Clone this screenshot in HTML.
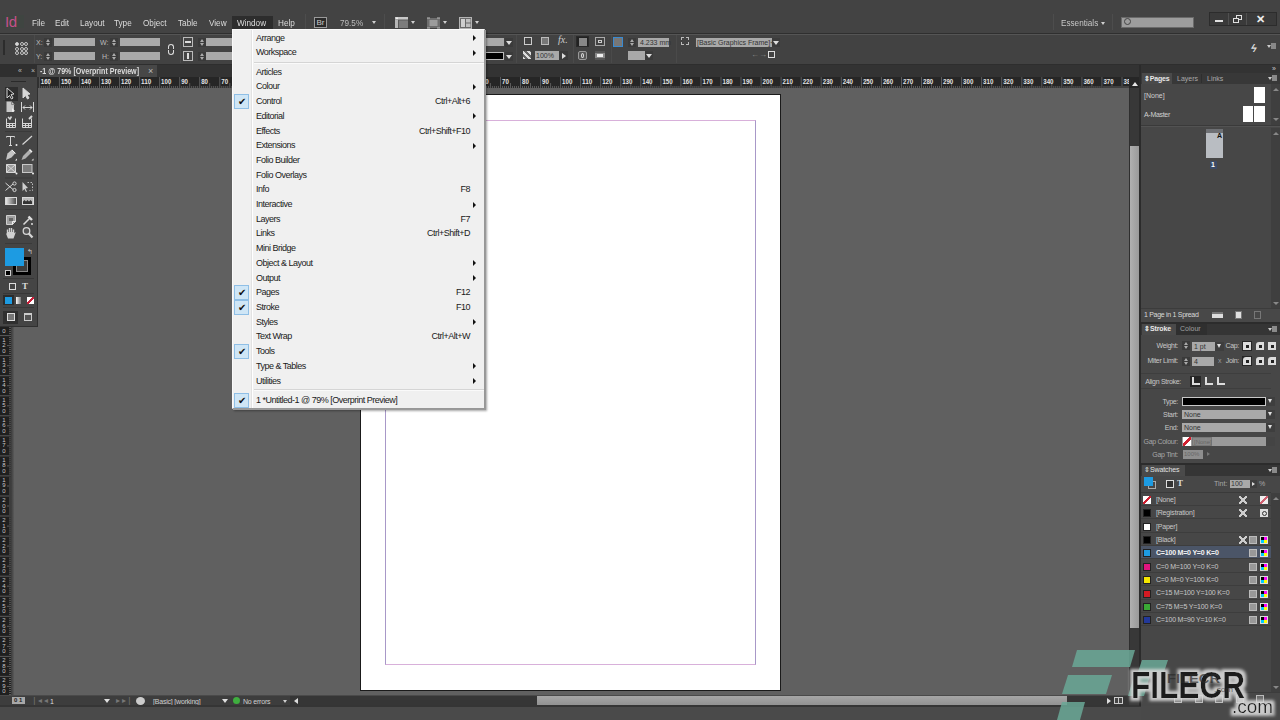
<!DOCTYPE html>
<html><head><meta charset="utf-8">
<style>
*{margin:0;padding:0;box-sizing:border-box}
html,body{width:1280px;height:720px;overflow:hidden;background:#606060;font-family:"Liberation Sans",sans-serif}
.a{position:absolute}
.mt{position:absolute;top:15.7px;font-size:9.5px;line-height:13px;color:#dcdcdc;transform:scaleX(0.86);transform-origin:0 0;white-space:nowrap}
.tri{position:absolute;width:0;height:0;border-style:solid;border-width:4px 3px 0 3px;border-color:#d0d0d0 transparent transparent transparent}
#menubar{left:0;top:0;width:1280px;height:34px;background:#434343;border-bottom:1px solid #2f2f2f}
#ctrl{left:0;top:34px;width:1280px;height:31px;background:#424242;border-top:1px solid #555;border-bottom:1px solid #2e2e2e}
#tabs{left:0;top:65px;width:1141px;height:12px;background:#333}
#hruler{left:37px;top:77px;width:1103px;height:11px;background:#262626;overflow:hidden}
#canvas{left:10px;top:88px;width:1119px;height:608px;background:#606060}
#tools{left:0;top:77px;width:38px;height:250px;background:#454545;border-right:1px solid #303030;border-bottom:1px solid #303030}
#vruler{left:0;top:327px;width:14px;height:369px;background:#1f1f1f}
#vscroll{left:1129px;top:77px;width:12px;height:619px;background:#3a3a3a}
#page{left:360px;top:94px;width:421px;height:597px;background:#fff;border:1px solid #1a1a1a}
#margin{left:385px;top:120px;width:371px;height:545px;border-style:solid;border-width:1px;border-color:#d8b0da #a898c8 #d8b0da #a898c8}
#status{left:0;top:695px;width:1141px;height:11px;background:#3c3c3c}
#bottom{left:0;top:706px;width:1280px;height:14px;background:#4a4a4a}
#hscroll{left:537px;top:696px;width:570px;height:10px;background:#929292}
#rpanel{left:1141px;top:65px;width:139px;height:655px;background:#494949}
#menu{left:232px;top:29px;width:253px;height:380px;background:#f0f0f0;border:1px solid #979797;border-left-color:#fafafa;border-top-color:#fafafa;box-shadow:1px 1px 0 #9a9a9a,2px 2px 2px rgba(0,0,0,.35)}
.mi{position:absolute;left:23px;height:13px;font-size:9px;line-height:13px;color:#1a1a1a;letter-spacing:-0.5px;white-space:nowrap}
.ms{position:absolute;right:14px;height:13px;font-size:9px;line-height:13px;color:#1a1a1a;letter-spacing:-0.5px;white-space:nowrap}
.marr{position:absolute;left:240px;width:0;height:0;border-style:solid;border-width:3px 0 3px 3.5px;border-color:transparent transparent transparent #111}
.chk{position:absolute;left:1px;width:15px;height:15px;background:#cfe6f6;border:1px solid #8fbfe6;text-align:center;font-size:10px;line-height:13px;color:#111}
.lbl{position:absolute;font-size:7px;line-height:9px;color:#bbb}
.spin{position:absolute;width:8px;height:9px;background:#3a3a3a}
.spin:before{content:"";position:absolute;left:2px;top:1px;border-style:solid;border-width:0 2px 3px 2px;border-color:transparent transparent #aaa transparent}
.spin:after{content:"";position:absolute;left:2px;top:5px;border-style:solid;border-width:3px 2px 0 2px;border-color:#aaa transparent transparent transparent}
.fld{position:absolute;height:8px;background:#a9a9a9}
.vsep{position:absolute;top:2px;width:1px;height:28px;background:#363636;border-right:1px solid #4a4a4a}
.ddb{position:absolute;width:8px;height:9px;background:#3b3b3b}
.ddb:after{content:"";position:absolute;left:1px;top:3px;border-style:solid;border-width:4px 3px 0 3px;border-color:#ddd transparent transparent transparent}

</style></head><body>
<div id="menubar" class="a"><div class="a" style="left:2px;top:15px;width:22px;height:13px;background:#3f4541"></div><div class="a" style="left:5px;top:14px;color:#c4508a;font:15px/15px 'Liberation Sans',sans-serif;letter-spacing:-0.3px">Id</div><div class="a" style="left:232px;top:16px;width:41px;height:13px;background:#2d2d2d"></div><span class="mt" style="left:31.6px">File</span><span class="mt" style="left:54.6px">Edit</span><span class="mt" style="left:79.6px">Layout</span><span class="mt" style="left:114.4px">Type</span><span class="mt" style="left:143px">Object</span><span class="mt" style="left:178px">Table</span><span class="mt" style="left:208.7px">View</span><span class="mt" style="left:237px">Window</span><span class="mt" style="left:278px">Help</span><div class="a" style="left:305px;top:14px;width:1px;height:16px;background:#393939;border-right:1px solid #4d4d4d"></div><div class="a" style="left:384px;top:14px;width:1px;height:16px;background:#393939;border-right:1px solid #4d4d4d"></div><div class="a" style="left:1053px;top:14px;width:1px;height:16px;background:#393939;border-right:1px solid #4d4d4d"></div><div class="a" style="left:1112px;top:14px;width:1px;height:16px;background:#393939;border-right:1px solid #4d4d4d"></div><div class="a" style="left:314px;top:17px;width:13px;height:11px;border:1px solid #9a9a9a;background:#2a2a2a;color:#ccc;font:8px/9px 'Liberation Sans',sans-serif;text-align:center">Br</div><span class="mt" style="left:340px;color:#bdbdbd">79.5%</span><div class="tri" style="left:372px;top:21px;border-width:3px 2.5px 0 2.5px"></div><div class="tri" style="left:411px;top:21px;border-width:3px 2.5px 0 2.5px"></div><div class="tri" style="left:443px;top:21px;border-width:3px 2.5px 0 2.5px"></div><div class="tri" style="left:475px;top:21px;border-width:3px 2.5px 0 2.5px"></div><svg class="a" style="left:394px;top:16px" width="80" height="14" viewBox="394 16 80 14"><rect x="395" y="17" width="13" height="11" fill="#5a5a5a"/><rect x="395" y="17" width="13" height="2.5" fill="#c8c8c8"/><rect x="395" y="19.5" width="3" height="8.5" fill="#b8b8b8"/><rect x="399" y="20.5" width="9" height="7.5" fill="#7c7c7c"/><rect x="396" y="17.5" width="2" height="1.5" fill="#eee"/><rect x="427" y="18" width="13" height="10" fill="#6e6e6e"/><rect x="429.5" y="20" width="8" height="6" fill="#9c9c9c"/><path d="M427 18 h3 M437 18 h3 M427 28 h3 M437 28 h3" stroke="#bbb" stroke-width="1"/><rect x="459.5" y="17.5" width="12" height="11" fill="#6a6a6a" stroke="#b5b5b5"/><rect x="461" y="19" width="4" height="8" fill="#d0d0d0"/><rect x="466" y="19" width="4.5" height="3.5" fill="#c0c0c0"/><rect x="466" y="23.5" width="4.5" height="3.5" fill="#c0c0c0"/></svg><span class="mt" style="left:1060.6px;color:#c8c8c8">Essentials</span><div class="tri" style="left:1101px;top:22px;border-width:3px 2px 0 2px"></div><div class="a" style="left:1121px;top:17px;width:73px;height:11px;background:#9d9d9d;border:1px solid #6a6a6a"></div><div class="a" style="left:1124px;top:18px;width:7px;height:7px;border:1px solid #444;border-radius:50%"></div><div class="a" style="left:1209px;top:12px;width:68px;height:14px;background:#3a3a3a;border:1px solid #2c2c2c"></div><div class="a" style="left:1228px;top:13px;width:1px;height:12px;background:#505050"></div><div class="a" style="left:1246px;top:13px;width:1px;height:12px;background:#505050"></div><div class="a" style="left:1215px;top:20px;width:8px;height:2px;background:#e0e0e0"></div><div class="a" style="left:1236px;top:15px;width:6px;height:5px;border:1px solid #e0e0e0"></div><div class="a" style="left:1233px;top:18px;width:6px;height:5px;border:1px solid #e0e0e0;background:#3a3a3a"></div><div class="a" style="left:1256px;top:12px;color:#eee;font:bold 11px/14px 'Liberation Sans',sans-serif">&#x2715;</div></div>
<div id="ctrl" class="a"><div class="a" style="left:0;top:-2px;width:1280px;height:30px"><div class="a" style="left:3px;top:7px;width:2px;height:15px;background:#2c2c2c"></div><div class="a" style="left:15.0px;top:9.0px;width:4px;height:4px;border:1px solid #c8c8c8;border-radius:50%;background:#ddd"></div><div class="a" style="left:19.6px;top:9.0px;width:4px;height:4px;border:1px solid #c8c8c8;border-radius:50%;background:transparent"></div><div class="a" style="left:24.2px;top:9.0px;width:4px;height:4px;border:1px solid #c8c8c8;border-radius:50%;background:transparent"></div><div class="a" style="left:15.0px;top:13.5px;width:4px;height:4px;border:1px solid #c8c8c8;border-radius:50%;background:transparent"></div><div class="a" style="left:19.6px;top:13.5px;width:4px;height:4px;border:1px solid #c8c8c8;border-radius:50%;background:transparent"></div><div class="a" style="left:24.2px;top:13.5px;width:4px;height:4px;border:1px solid #c8c8c8;border-radius:50%;background:transparent"></div><div class="a" style="left:15.0px;top:18.0px;width:4px;height:4px;border:1px solid #c8c8c8;border-radius:50%;background:transparent"></div><div class="a" style="left:19.6px;top:18.0px;width:4px;height:4px;border:1px solid #c8c8c8;border-radius:50%;background:transparent"></div><div class="a" style="left:24.2px;top:18.0px;width:4px;height:4px;border:1px solid #c8c8c8;border-radius:50%;background:transparent"></div><div class="lbl" style="left:36px;top:5px">X:</div><div class="lbl" style="left:36px;top:19px">Y:</div><div class="lbl" style="left:100px;top:5px">W:</div><div class="lbl" style="left:102px;top:19px">H:</div><div class="spin" style="left:44px;top:5px"></div><div class="spin" style="left:44px;top:19px"></div><div class="spin" style="left:110px;top:5px"></div><div class="spin" style="left:110px;top:19px"></div><div class="spin" style="left:198px;top:5px"></div><div class="spin" style="left:198px;top:19px"></div><div class="fld" style="left:54px;top:5px;width:41px"></div><div class="fld" style="left:54px;top:19px;width:41px"></div><div class="fld" style="left:120px;top:5px;width:40px"></div><div class="fld" style="left:120px;top:19px;width:40px"></div><div class="fld" style="left:206px;top:5px;width:30px"></div><div class="fld" style="left:206px;top:19px;width:30px"></div><div class="a" style="left:168px;top:11px;width:6px;height:5px;border:1.5px solid #ddd;border-bottom:none;border-radius:3px 3px 0 0"></div><div class="a" style="left:168px;top:17px;width:6px;height:5px;border:1.5px solid #ddd;border-top:none;border-radius:0 0 3px 3px"></div><div class="vsep" style="left:34px"></div><div class="vsep" style="left:180px"></div><div class="vsep" style="left:516px"></div><div class="vsep" style="left:573px"></div><div class="vsep" style="left:611px"></div><div class="vsep" style="left:676px"></div><div class="a" style="left:183px;top:4px;width:10px;height:10px;border:1px solid #bbb;background:#444"><div class="a" style="left:1px;top:3px;width:6px;height:2px;background:#ddd"></div></div><div class="a" style="left:183px;top:18px;width:10px;height:10px;border:1px solid #bbb;background:#444"><div class="a" style="left:3px;top:1px;width:2px;height:6px;background:#ddd"></div></div><div class="fld" style="left:485px;top:5px;width:19px"></div><div class="ddb" style="left:505px;top:5px"></div><div class="a" style="left:485px;top:19px;width:19px;height:8px;background:#000;border:1px solid #bbb;border-left:none"></div><div class="ddb" style="left:505px;top:19px"></div><div class="a" style="left:524px;top:4px;width:8px;height:8px;border:1px solid #ccc"></div><div class="a" style="left:541px;top:4px;width:8px;height:8px;border:1px solid #bbb;background:#777"></div><div class="a" style="left:558px;top:1px;color:#ccc;font:italic 10px/12px 'Liberation Serif',serif">fx.</div><div class="a" style="left:523px;top:18px;width:8px;height:8px;background:repeating-linear-gradient(45deg,#ddd 0 2px,#666 2px 4px)"></div><div class="a" style="left:535px;top:18px;width:24px;height:9px;background:#a9a9a9;color:#333;font:7px/9px 'Liberation Sans',sans-serif;padding-left:1px">100%</div><div class="a" style="left:559px;top:18px;width:9px;height:9px;background:#3a3a3a"><div class="a" style="left:3px;top:1.5px;width:0;height:0;border-style:solid;border-width:3px 0 3px 4px;border-color:transparent transparent transparent #ddd"></div></div><div class="a" style="left:576px;top:3px;width:13px;height:11px;background:#222;border:1px solid #2a2a2a"><div class="a" style="left:2px;top:1px;width:8px;height:8px;background:#888"></div></div><div class="a" style="left:595px;top:4px;width:10px;height:9px;border:1px solid #aaa"><div class="a" style="left:2px;top:2px;width:4px;height:3px;border:1px solid #ccc"></div></div><div class="a" style="left:578px;top:18px;width:9px;height:9px;border:1px solid #999;background:#555;border-radius:2px"><div class="a" style="left:2px;top:1px;width:3px;height:5px;border:1px solid #ddd;border-radius:50%"></div></div><div class="a" style="left:595px;top:18px;width:10px;height:9px;background:#888;border-top:2px solid #555;border-bottom:2px solid #555"><div class="a" style="left:2px;top:1px;width:6px;height:3px;background:#eee"></div></div><div class="a" style="left:613px;top:4px;width:10px;height:10px;border:1.5px solid #3a8ad0;background:#777"></div><div class="spin" style="left:628px;top:5px"></div><div class="a" style="left:638px;top:5px;width:31px;height:9px;background:#a9a9a9;color:#333;font:7px/9px 'Liberation Sans',sans-serif;padding-left:2px;white-space:nowrap">4.233 mm</div><div class="fld" style="left:628px;top:18px;width:17px;height:9px"></div><div class="ddb" style="left:645px;top:18px"></div><div class="a" style="left:681px;top:4px;width:8px;height:8px;border:1px dashed #bbb"></div><div class="a" style="left:695px;top:5px;width:77px;height:9px;background:#a9a9a9;color:#333;font:7px/9px 'Liberation Sans',sans-serif;padding-left:1px;white-space:nowrap;border-left:1px solid #444">[Basic Graphics Frame]+</div><div class="ddb" style="left:772px;top:5px"></div><div class="a" style="left:751px;top:18px;width:10px;height:8px;color:#888;font:8px/8px 'Liberation Sans',sans-serif">&#x2190;&#x2192;</div><div class="a" style="left:768px;top:18px;width:7px;height:7px;border:1px solid #ddd"></div><div class="a" style="left:1251px;top:8px;color:#ddd;font:bold 11px/14px 'Liberation Sans',sans-serif;transform:skewX(-15deg)">&#x03DF;</div><div class="a" style="left:1267px;top:12px;width:0;height:0;border-style:solid;border-width:3px 2px 0 2px;border-color:#ccc transparent transparent transparent"></div><div class="a" style="left:1271px;top:10px;width:5px;height:6px;background:#888"></div></div></div>
<div id="tabs" class="a"><div class="a" style="left:0;top:0;width:37px;height:12px;background:#2f2f2f"></div><div class="a" style="left:18px;top:1px;color:#bbb;font:7px/10px 'Liberation Sans',sans-serif">&#x00AB;</div><div class="a" style="left:31px;top:1px;color:#bbb;font:7px/10px 'Liberation Sans',sans-serif">&#x00D7;</div><div class="a" style="left:37px;top:0;width:120px;height:12px;background:#474747"></div><div class="a" style="left:40px;top:0px;color:#dcdcdc;font:bold 9px/12px 'Liberation Sans',sans-serif;white-space:nowrap;transform:scaleX(0.79);transform-origin:0 0">-1 @ 79% [Overprint Preview]</div><div class="a" style="left:148px;top:0px;color:#bbb;font:9px/12px 'Liberation Sans',sans-serif">&#x00D7;</div></div>
<div id="canvas" class="a"></div>
<div id="page" class="a"></div>
<div id="margin" class="a"></div>
<div id="hruler" class="a"><svg class="a" style="left:0;top:0" width="1092" height="11"><g stroke="#5a5a5a" stroke-width="1"><line x1="2.3" y1="0" x2="2.3" y2="11"/><line x1="4.3" y1="9" x2="4.3" y2="11"/><line x1="6.3" y1="9" x2="6.3" y2="11"/><line x1="8.3" y1="9" x2="8.3" y2="11"/><line x1="10.3" y1="9" x2="10.3" y2="11"/><line x1="12.3" y1="6" x2="12.3" y2="11"/><line x1="14.3" y1="9" x2="14.3" y2="11"/><line x1="16.3" y1="9" x2="16.3" y2="11"/><line x1="18.3" y1="9" x2="18.3" y2="11"/><line x1="20.3" y1="9" x2="20.3" y2="11"/><line x1="22.4" y1="0" x2="22.4" y2="11"/><line x1="24.4" y1="9" x2="24.4" y2="11"/><line x1="26.4" y1="9" x2="26.4" y2="11"/><line x1="28.4" y1="9" x2="28.4" y2="11"/><line x1="30.4" y1="9" x2="30.4" y2="11"/><line x1="32.4" y1="6" x2="32.4" y2="11"/><line x1="34.4" y1="9" x2="34.4" y2="11"/><line x1="36.4" y1="9" x2="36.4" y2="11"/><line x1="38.4" y1="9" x2="38.4" y2="11"/><line x1="40.4" y1="9" x2="40.4" y2="11"/><line x1="42.4" y1="0" x2="42.4" y2="11"/><line x1="44.4" y1="9" x2="44.4" y2="11"/><line x1="46.4" y1="9" x2="46.4" y2="11"/><line x1="48.4" y1="9" x2="48.4" y2="11"/><line x1="50.4" y1="9" x2="50.4" y2="11"/><line x1="52.4" y1="6" x2="52.4" y2="11"/><line x1="54.4" y1="9" x2="54.4" y2="11"/><line x1="56.4" y1="9" x2="56.4" y2="11"/><line x1="58.4" y1="9" x2="58.4" y2="11"/><line x1="60.4" y1="9" x2="60.4" y2="11"/><line x1="62.5" y1="0" x2="62.5" y2="11"/><line x1="64.5" y1="9" x2="64.5" y2="11"/><line x1="66.5" y1="9" x2="66.5" y2="11"/><line x1="68.5" y1="9" x2="68.5" y2="11"/><line x1="70.5" y1="9" x2="70.5" y2="11"/><line x1="72.5" y1="6" x2="72.5" y2="11"/><line x1="74.5" y1="9" x2="74.5" y2="11"/><line x1="76.5" y1="9" x2="76.5" y2="11"/><line x1="78.5" y1="9" x2="78.5" y2="11"/><line x1="80.5" y1="9" x2="80.5" y2="11"/><line x1="82.5" y1="0" x2="82.5" y2="11"/><line x1="84.5" y1="9" x2="84.5" y2="11"/><line x1="86.5" y1="9" x2="86.5" y2="11"/><line x1="88.5" y1="9" x2="88.5" y2="11"/><line x1="90.5" y1="9" x2="90.5" y2="11"/><line x1="92.5" y1="6" x2="92.5" y2="11"/><line x1="94.5" y1="9" x2="94.5" y2="11"/><line x1="96.5" y1="9" x2="96.5" y2="11"/><line x1="98.5" y1="9" x2="98.5" y2="11"/><line x1="100.5" y1="9" x2="100.5" y2="11"/><line x1="102.6" y1="0" x2="102.6" y2="11"/><line x1="104.6" y1="9" x2="104.6" y2="11"/><line x1="106.6" y1="9" x2="106.6" y2="11"/><line x1="108.6" y1="9" x2="108.6" y2="11"/><line x1="110.6" y1="9" x2="110.6" y2="11"/><line x1="112.6" y1="6" x2="112.6" y2="11"/><line x1="114.6" y1="9" x2="114.6" y2="11"/><line x1="116.6" y1="9" x2="116.6" y2="11"/><line x1="118.6" y1="9" x2="118.6" y2="11"/><line x1="120.6" y1="9" x2="120.6" y2="11"/><line x1="122.6" y1="0" x2="122.6" y2="11"/><line x1="124.6" y1="9" x2="124.6" y2="11"/><line x1="126.6" y1="9" x2="126.6" y2="11"/><line x1="128.6" y1="9" x2="128.6" y2="11"/><line x1="130.6" y1="9" x2="130.6" y2="11"/><line x1="132.6" y1="6" x2="132.6" y2="11"/><line x1="134.6" y1="9" x2="134.6" y2="11"/><line x1="136.6" y1="9" x2="136.6" y2="11"/><line x1="138.6" y1="9" x2="138.6" y2="11"/><line x1="140.6" y1="9" x2="140.6" y2="11"/><line x1="142.7" y1="0" x2="142.7" y2="11"/><line x1="144.7" y1="9" x2="144.7" y2="11"/><line x1="146.7" y1="9" x2="146.7" y2="11"/><line x1="148.7" y1="9" x2="148.7" y2="11"/><line x1="150.7" y1="9" x2="150.7" y2="11"/><line x1="152.7" y1="6" x2="152.7" y2="11"/><line x1="154.7" y1="9" x2="154.7" y2="11"/><line x1="156.7" y1="9" x2="156.7" y2="11"/><line x1="158.7" y1="9" x2="158.7" y2="11"/><line x1="160.7" y1="9" x2="160.7" y2="11"/><line x1="162.7" y1="0" x2="162.7" y2="11"/><line x1="164.7" y1="9" x2="164.7" y2="11"/><line x1="166.7" y1="9" x2="166.7" y2="11"/><line x1="168.7" y1="9" x2="168.7" y2="11"/><line x1="170.7" y1="9" x2="170.7" y2="11"/><line x1="172.7" y1="6" x2="172.7" y2="11"/><line x1="174.7" y1="9" x2="174.7" y2="11"/><line x1="176.7" y1="9" x2="176.7" y2="11"/><line x1="178.7" y1="9" x2="178.7" y2="11"/><line x1="180.7" y1="9" x2="180.7" y2="11"/><line x1="182.8" y1="0" x2="182.8" y2="11"/><line x1="184.8" y1="9" x2="184.8" y2="11"/><line x1="186.8" y1="9" x2="186.8" y2="11"/><line x1="188.8" y1="9" x2="188.8" y2="11"/><line x1="190.8" y1="9" x2="190.8" y2="11"/><line x1="192.8" y1="6" x2="192.8" y2="11"/><line x1="194.8" y1="9" x2="194.8" y2="11"/><line x1="196.8" y1="9" x2="196.8" y2="11"/><line x1="198.8" y1="9" x2="198.8" y2="11"/><line x1="200.8" y1="9" x2="200.8" y2="11"/><line x1="202.8" y1="0" x2="202.8" y2="11"/><line x1="204.8" y1="9" x2="204.8" y2="11"/><line x1="206.8" y1="9" x2="206.8" y2="11"/><line x1="208.8" y1="9" x2="208.8" y2="11"/><line x1="210.8" y1="9" x2="210.8" y2="11"/><line x1="212.8" y1="6" x2="212.8" y2="11"/><line x1="214.8" y1="9" x2="214.8" y2="11"/><line x1="216.8" y1="9" x2="216.8" y2="11"/><line x1="218.8" y1="9" x2="218.8" y2="11"/><line x1="220.8" y1="9" x2="220.8" y2="11"/><line x1="222.9" y1="0" x2="222.9" y2="11"/><line x1="224.9" y1="9" x2="224.9" y2="11"/><line x1="226.9" y1="9" x2="226.9" y2="11"/><line x1="228.9" y1="9" x2="228.9" y2="11"/><line x1="230.9" y1="9" x2="230.9" y2="11"/><line x1="232.9" y1="6" x2="232.9" y2="11"/><line x1="234.9" y1="9" x2="234.9" y2="11"/><line x1="236.9" y1="9" x2="236.9" y2="11"/><line x1="238.9" y1="9" x2="238.9" y2="11"/><line x1="240.9" y1="9" x2="240.9" y2="11"/><line x1="242.9" y1="0" x2="242.9" y2="11"/><line x1="244.9" y1="9" x2="244.9" y2="11"/><line x1="246.9" y1="9" x2="246.9" y2="11"/><line x1="248.9" y1="9" x2="248.9" y2="11"/><line x1="250.9" y1="9" x2="250.9" y2="11"/><line x1="252.9" y1="6" x2="252.9" y2="11"/><line x1="254.9" y1="9" x2="254.9" y2="11"/><line x1="256.9" y1="9" x2="256.9" y2="11"/><line x1="258.9" y1="9" x2="258.9" y2="11"/><line x1="260.9" y1="9" x2="260.9" y2="11"/><line x1="263.0" y1="0" x2="263.0" y2="11"/><line x1="265.0" y1="9" x2="265.0" y2="11"/><line x1="267.0" y1="9" x2="267.0" y2="11"/><line x1="269.0" y1="9" x2="269.0" y2="11"/><line x1="271.0" y1="9" x2="271.0" y2="11"/><line x1="273.0" y1="6" x2="273.0" y2="11"/><line x1="275.0" y1="9" x2="275.0" y2="11"/><line x1="277.0" y1="9" x2="277.0" y2="11"/><line x1="279.0" y1="9" x2="279.0" y2="11"/><line x1="281.0" y1="9" x2="281.0" y2="11"/><line x1="283.0" y1="0" x2="283.0" y2="11"/><line x1="285.0" y1="9" x2="285.0" y2="11"/><line x1="287.0" y1="9" x2="287.0" y2="11"/><line x1="289.0" y1="9" x2="289.0" y2="11"/><line x1="291.0" y1="9" x2="291.0" y2="11"/><line x1="293.0" y1="6" x2="293.0" y2="11"/><line x1="295.0" y1="9" x2="295.0" y2="11"/><line x1="297.0" y1="9" x2="297.0" y2="11"/><line x1="299.0" y1="9" x2="299.0" y2="11"/><line x1="301.0" y1="9" x2="301.0" y2="11"/><line x1="303.1" y1="0" x2="303.1" y2="11"/><line x1="305.1" y1="9" x2="305.1" y2="11"/><line x1="307.1" y1="9" x2="307.1" y2="11"/><line x1="309.1" y1="9" x2="309.1" y2="11"/><line x1="311.1" y1="9" x2="311.1" y2="11"/><line x1="313.1" y1="6" x2="313.1" y2="11"/><line x1="315.1" y1="9" x2="315.1" y2="11"/><line x1="317.1" y1="9" x2="317.1" y2="11"/><line x1="319.1" y1="9" x2="319.1" y2="11"/><line x1="321.1" y1="9" x2="321.1" y2="11"/><line x1="323.1" y1="0" x2="323.1" y2="11"/><line x1="325.1" y1="9" x2="325.1" y2="11"/><line x1="327.1" y1="9" x2="327.1" y2="11"/><line x1="329.1" y1="9" x2="329.1" y2="11"/><line x1="331.1" y1="9" x2="331.1" y2="11"/><line x1="333.1" y1="6" x2="333.1" y2="11"/><line x1="335.1" y1="9" x2="335.1" y2="11"/><line x1="337.1" y1="9" x2="337.1" y2="11"/><line x1="339.1" y1="9" x2="339.1" y2="11"/><line x1="341.1" y1="9" x2="341.1" y2="11"/><line x1="343.2" y1="0" x2="343.2" y2="11"/><line x1="345.2" y1="9" x2="345.2" y2="11"/><line x1="347.2" y1="9" x2="347.2" y2="11"/><line x1="349.2" y1="9" x2="349.2" y2="11"/><line x1="351.2" y1="9" x2="351.2" y2="11"/><line x1="353.2" y1="6" x2="353.2" y2="11"/><line x1="355.2" y1="9" x2="355.2" y2="11"/><line x1="357.2" y1="9" x2="357.2" y2="11"/><line x1="359.2" y1="9" x2="359.2" y2="11"/><line x1="361.2" y1="9" x2="361.2" y2="11"/><line x1="363.2" y1="0" x2="363.2" y2="11"/><line x1="365.2" y1="9" x2="365.2" y2="11"/><line x1="367.2" y1="9" x2="367.2" y2="11"/><line x1="369.2" y1="9" x2="369.2" y2="11"/><line x1="371.2" y1="9" x2="371.2" y2="11"/><line x1="373.2" y1="6" x2="373.2" y2="11"/><line x1="375.2" y1="9" x2="375.2" y2="11"/><line x1="377.2" y1="9" x2="377.2" y2="11"/><line x1="379.2" y1="9" x2="379.2" y2="11"/><line x1="381.2" y1="9" x2="381.2" y2="11"/><line x1="383.2" y1="0" x2="383.2" y2="11"/><line x1="385.3" y1="9" x2="385.3" y2="11"/><line x1="387.3" y1="9" x2="387.3" y2="11"/><line x1="389.3" y1="9" x2="389.3" y2="11"/><line x1="391.3" y1="9" x2="391.3" y2="11"/><line x1="393.3" y1="6" x2="393.3" y2="11"/><line x1="395.3" y1="9" x2="395.3" y2="11"/><line x1="397.3" y1="9" x2="397.3" y2="11"/><line x1="399.3" y1="9" x2="399.3" y2="11"/><line x1="401.3" y1="9" x2="401.3" y2="11"/><line x1="403.3" y1="0" x2="403.3" y2="11"/><line x1="405.3" y1="9" x2="405.3" y2="11"/><line x1="407.3" y1="9" x2="407.3" y2="11"/><line x1="409.3" y1="9" x2="409.3" y2="11"/><line x1="411.3" y1="9" x2="411.3" y2="11"/><line x1="413.3" y1="6" x2="413.3" y2="11"/><line x1="415.3" y1="9" x2="415.3" y2="11"/><line x1="417.3" y1="9" x2="417.3" y2="11"/><line x1="419.3" y1="9" x2="419.3" y2="11"/><line x1="421.3" y1="9" x2="421.3" y2="11"/><line x1="423.4" y1="0" x2="423.4" y2="11"/><line x1="425.4" y1="9" x2="425.4" y2="11"/><line x1="427.4" y1="9" x2="427.4" y2="11"/><line x1="429.4" y1="9" x2="429.4" y2="11"/><line x1="431.4" y1="9" x2="431.4" y2="11"/><line x1="433.4" y1="6" x2="433.4" y2="11"/><line x1="435.4" y1="9" x2="435.4" y2="11"/><line x1="437.4" y1="9" x2="437.4" y2="11"/><line x1="439.4" y1="9" x2="439.4" y2="11"/><line x1="441.4" y1="9" x2="441.4" y2="11"/><line x1="443.4" y1="0" x2="443.4" y2="11"/><line x1="445.4" y1="9" x2="445.4" y2="11"/><line x1="447.4" y1="9" x2="447.4" y2="11"/><line x1="449.4" y1="9" x2="449.4" y2="11"/><line x1="451.4" y1="9" x2="451.4" y2="11"/><line x1="453.4" y1="6" x2="453.4" y2="11"/><line x1="455.4" y1="9" x2="455.4" y2="11"/><line x1="457.4" y1="9" x2="457.4" y2="11"/><line x1="459.4" y1="9" x2="459.4" y2="11"/><line x1="461.4" y1="9" x2="461.4" y2="11"/><line x1="463.5" y1="0" x2="463.5" y2="11"/><line x1="465.5" y1="9" x2="465.5" y2="11"/><line x1="467.5" y1="9" x2="467.5" y2="11"/><line x1="469.5" y1="9" x2="469.5" y2="11"/><line x1="471.5" y1="9" x2="471.5" y2="11"/><line x1="473.5" y1="6" x2="473.5" y2="11"/><line x1="475.5" y1="9" x2="475.5" y2="11"/><line x1="477.5" y1="9" x2="477.5" y2="11"/><line x1="479.5" y1="9" x2="479.5" y2="11"/><line x1="481.5" y1="9" x2="481.5" y2="11"/><line x1="483.5" y1="0" x2="483.5" y2="11"/><line x1="485.5" y1="9" x2="485.5" y2="11"/><line x1="487.5" y1="9" x2="487.5" y2="11"/><line x1="489.5" y1="9" x2="489.5" y2="11"/><line x1="491.5" y1="9" x2="491.5" y2="11"/><line x1="493.5" y1="6" x2="493.5" y2="11"/><line x1="495.5" y1="9" x2="495.5" y2="11"/><line x1="497.5" y1="9" x2="497.5" y2="11"/><line x1="499.5" y1="9" x2="499.5" y2="11"/><line x1="501.5" y1="9" x2="501.5" y2="11"/><line x1="503.6" y1="0" x2="503.6" y2="11"/><line x1="505.6" y1="9" x2="505.6" y2="11"/><line x1="507.6" y1="9" x2="507.6" y2="11"/><line x1="509.6" y1="9" x2="509.6" y2="11"/><line x1="511.6" y1="9" x2="511.6" y2="11"/><line x1="513.6" y1="6" x2="513.6" y2="11"/><line x1="515.6" y1="9" x2="515.6" y2="11"/><line x1="517.6" y1="9" x2="517.6" y2="11"/><line x1="519.6" y1="9" x2="519.6" y2="11"/><line x1="521.6" y1="9" x2="521.6" y2="11"/><line x1="523.6" y1="0" x2="523.6" y2="11"/><line x1="525.6" y1="9" x2="525.6" y2="11"/><line x1="527.6" y1="9" x2="527.6" y2="11"/><line x1="529.6" y1="9" x2="529.6" y2="11"/><line x1="531.6" y1="9" x2="531.6" y2="11"/><line x1="533.6" y1="6" x2="533.6" y2="11"/><line x1="535.6" y1="9" x2="535.6" y2="11"/><line x1="537.6" y1="9" x2="537.6" y2="11"/><line x1="539.6" y1="9" x2="539.6" y2="11"/><line x1="541.6" y1="9" x2="541.6" y2="11"/><line x1="543.6" y1="0" x2="543.6" y2="11"/><line x1="545.7" y1="9" x2="545.7" y2="11"/><line x1="547.7" y1="9" x2="547.7" y2="11"/><line x1="549.7" y1="9" x2="549.7" y2="11"/><line x1="551.7" y1="9" x2="551.7" y2="11"/><line x1="553.7" y1="6" x2="553.7" y2="11"/><line x1="555.7" y1="9" x2="555.7" y2="11"/><line x1="557.7" y1="9" x2="557.7" y2="11"/><line x1="559.7" y1="9" x2="559.7" y2="11"/><line x1="561.7" y1="9" x2="561.7" y2="11"/><line x1="563.7" y1="0" x2="563.7" y2="11"/><line x1="565.7" y1="9" x2="565.7" y2="11"/><line x1="567.7" y1="9" x2="567.7" y2="11"/><line x1="569.7" y1="9" x2="569.7" y2="11"/><line x1="571.7" y1="9" x2="571.7" y2="11"/><line x1="573.7" y1="6" x2="573.7" y2="11"/><line x1="575.7" y1="9" x2="575.7" y2="11"/><line x1="577.7" y1="9" x2="577.7" y2="11"/><line x1="579.7" y1="9" x2="579.7" y2="11"/><line x1="581.7" y1="9" x2="581.7" y2="11"/><line x1="583.8" y1="0" x2="583.8" y2="11"/><line x1="585.8" y1="9" x2="585.8" y2="11"/><line x1="587.8" y1="9" x2="587.8" y2="11"/><line x1="589.8" y1="9" x2="589.8" y2="11"/><line x1="591.8" y1="9" x2="591.8" y2="11"/><line x1="593.8" y1="6" x2="593.8" y2="11"/><line x1="595.8" y1="9" x2="595.8" y2="11"/><line x1="597.8" y1="9" x2="597.8" y2="11"/><line x1="599.8" y1="9" x2="599.8" y2="11"/><line x1="601.8" y1="9" x2="601.8" y2="11"/><line x1="603.8" y1="0" x2="603.8" y2="11"/><line x1="605.8" y1="9" x2="605.8" y2="11"/><line x1="607.8" y1="9" x2="607.8" y2="11"/><line x1="609.8" y1="9" x2="609.8" y2="11"/><line x1="611.8" y1="9" x2="611.8" y2="11"/><line x1="613.8" y1="6" x2="613.8" y2="11"/><line x1="615.8" y1="9" x2="615.8" y2="11"/><line x1="617.8" y1="9" x2="617.8" y2="11"/><line x1="619.8" y1="9" x2="619.8" y2="11"/><line x1="621.8" y1="9" x2="621.8" y2="11"/><line x1="623.9" y1="0" x2="623.9" y2="11"/><line x1="625.9" y1="9" x2="625.9" y2="11"/><line x1="627.9" y1="9" x2="627.9" y2="11"/><line x1="629.9" y1="9" x2="629.9" y2="11"/><line x1="631.9" y1="9" x2="631.9" y2="11"/><line x1="633.9" y1="6" x2="633.9" y2="11"/><line x1="635.9" y1="9" x2="635.9" y2="11"/><line x1="637.9" y1="9" x2="637.9" y2="11"/><line x1="639.9" y1="9" x2="639.9" y2="11"/><line x1="641.9" y1="9" x2="641.9" y2="11"/><line x1="643.9" y1="0" x2="643.9" y2="11"/><line x1="645.9" y1="9" x2="645.9" y2="11"/><line x1="647.9" y1="9" x2="647.9" y2="11"/><line x1="649.9" y1="9" x2="649.9" y2="11"/><line x1="651.9" y1="9" x2="651.9" y2="11"/><line x1="653.9" y1="6" x2="653.9" y2="11"/><line x1="655.9" y1="9" x2="655.9" y2="11"/><line x1="657.9" y1="9" x2="657.9" y2="11"/><line x1="659.9" y1="9" x2="659.9" y2="11"/><line x1="661.9" y1="9" x2="661.9" y2="11"/><line x1="664.0" y1="0" x2="664.0" y2="11"/><line x1="666.0" y1="9" x2="666.0" y2="11"/><line x1="668.0" y1="9" x2="668.0" y2="11"/><line x1="670.0" y1="9" x2="670.0" y2="11"/><line x1="672.0" y1="9" x2="672.0" y2="11"/><line x1="674.0" y1="6" x2="674.0" y2="11"/><line x1="676.0" y1="9" x2="676.0" y2="11"/><line x1="678.0" y1="9" x2="678.0" y2="11"/><line x1="680.0" y1="9" x2="680.0" y2="11"/><line x1="682.0" y1="9" x2="682.0" y2="11"/><line x1="684.0" y1="0" x2="684.0" y2="11"/><line x1="686.0" y1="9" x2="686.0" y2="11"/><line x1="688.0" y1="9" x2="688.0" y2="11"/><line x1="690.0" y1="9" x2="690.0" y2="11"/><line x1="692.0" y1="9" x2="692.0" y2="11"/><line x1="694.0" y1="6" x2="694.0" y2="11"/><line x1="696.0" y1="9" x2="696.0" y2="11"/><line x1="698.0" y1="9" x2="698.0" y2="11"/><line x1="700.0" y1="9" x2="700.0" y2="11"/><line x1="702.0" y1="9" x2="702.0" y2="11"/><line x1="704.0" y1="0" x2="704.0" y2="11"/><line x1="706.1" y1="9" x2="706.1" y2="11"/><line x1="708.1" y1="9" x2="708.1" y2="11"/><line x1="710.1" y1="9" x2="710.1" y2="11"/><line x1="712.1" y1="9" x2="712.1" y2="11"/><line x1="714.1" y1="6" x2="714.1" y2="11"/><line x1="716.1" y1="9" x2="716.1" y2="11"/><line x1="718.1" y1="9" x2="718.1" y2="11"/><line x1="720.1" y1="9" x2="720.1" y2="11"/><line x1="722.1" y1="9" x2="722.1" y2="11"/><line x1="724.1" y1="0" x2="724.1" y2="11"/><line x1="726.1" y1="9" x2="726.1" y2="11"/><line x1="728.1" y1="9" x2="728.1" y2="11"/><line x1="730.1" y1="9" x2="730.1" y2="11"/><line x1="732.1" y1="9" x2="732.1" y2="11"/><line x1="734.1" y1="6" x2="734.1" y2="11"/><line x1="736.1" y1="9" x2="736.1" y2="11"/><line x1="738.1" y1="9" x2="738.1" y2="11"/><line x1="740.1" y1="9" x2="740.1" y2="11"/><line x1="742.1" y1="9" x2="742.1" y2="11"/><line x1="744.1" y1="0" x2="744.1" y2="11"/><line x1="746.2" y1="9" x2="746.2" y2="11"/><line x1="748.2" y1="9" x2="748.2" y2="11"/><line x1="750.2" y1="9" x2="750.2" y2="11"/><line x1="752.2" y1="9" x2="752.2" y2="11"/><line x1="754.2" y1="6" x2="754.2" y2="11"/><line x1="756.2" y1="9" x2="756.2" y2="11"/><line x1="758.2" y1="9" x2="758.2" y2="11"/><line x1="760.2" y1="9" x2="760.2" y2="11"/><line x1="762.2" y1="9" x2="762.2" y2="11"/><line x1="764.2" y1="0" x2="764.2" y2="11"/><line x1="766.2" y1="9" x2="766.2" y2="11"/><line x1="768.2" y1="9" x2="768.2" y2="11"/><line x1="770.2" y1="9" x2="770.2" y2="11"/><line x1="772.2" y1="9" x2="772.2" y2="11"/><line x1="774.2" y1="6" x2="774.2" y2="11"/><line x1="776.2" y1="9" x2="776.2" y2="11"/><line x1="778.2" y1="9" x2="778.2" y2="11"/><line x1="780.2" y1="9" x2="780.2" y2="11"/><line x1="782.2" y1="9" x2="782.2" y2="11"/><line x1="784.2" y1="0" x2="784.2" y2="11"/><line x1="786.3" y1="9" x2="786.3" y2="11"/><line x1="788.3" y1="9" x2="788.3" y2="11"/><line x1="790.3" y1="9" x2="790.3" y2="11"/><line x1="792.3" y1="9" x2="792.3" y2="11"/><line x1="794.3" y1="6" x2="794.3" y2="11"/><line x1="796.3" y1="9" x2="796.3" y2="11"/><line x1="798.3" y1="9" x2="798.3" y2="11"/><line x1="800.3" y1="9" x2="800.3" y2="11"/><line x1="802.3" y1="9" x2="802.3" y2="11"/><line x1="804.3" y1="0" x2="804.3" y2="11"/><line x1="806.3" y1="9" x2="806.3" y2="11"/><line x1="808.3" y1="9" x2="808.3" y2="11"/><line x1="810.3" y1="9" x2="810.3" y2="11"/><line x1="812.3" y1="9" x2="812.3" y2="11"/><line x1="814.3" y1="6" x2="814.3" y2="11"/><line x1="816.3" y1="9" x2="816.3" y2="11"/><line x1="818.3" y1="9" x2="818.3" y2="11"/><line x1="820.3" y1="9" x2="820.3" y2="11"/><line x1="822.3" y1="9" x2="822.3" y2="11"/><line x1="824.4" y1="0" x2="824.4" y2="11"/><line x1="826.4" y1="9" x2="826.4" y2="11"/><line x1="828.4" y1="9" x2="828.4" y2="11"/><line x1="830.4" y1="9" x2="830.4" y2="11"/><line x1="832.4" y1="9" x2="832.4" y2="11"/><line x1="834.4" y1="6" x2="834.4" y2="11"/><line x1="836.4" y1="9" x2="836.4" y2="11"/><line x1="838.4" y1="9" x2="838.4" y2="11"/><line x1="840.4" y1="9" x2="840.4" y2="11"/><line x1="842.4" y1="9" x2="842.4" y2="11"/><line x1="844.4" y1="0" x2="844.4" y2="11"/><line x1="846.4" y1="9" x2="846.4" y2="11"/><line x1="848.4" y1="9" x2="848.4" y2="11"/><line x1="850.4" y1="9" x2="850.4" y2="11"/><line x1="852.4" y1="9" x2="852.4" y2="11"/><line x1="854.4" y1="6" x2="854.4" y2="11"/><line x1="856.4" y1="9" x2="856.4" y2="11"/><line x1="858.4" y1="9" x2="858.4" y2="11"/><line x1="860.4" y1="9" x2="860.4" y2="11"/><line x1="862.4" y1="9" x2="862.4" y2="11"/><line x1="864.5" y1="0" x2="864.5" y2="11"/><line x1="866.5" y1="9" x2="866.5" y2="11"/><line x1="868.5" y1="9" x2="868.5" y2="11"/><line x1="870.5" y1="9" x2="870.5" y2="11"/><line x1="872.5" y1="9" x2="872.5" y2="11"/><line x1="874.5" y1="6" x2="874.5" y2="11"/><line x1="876.5" y1="9" x2="876.5" y2="11"/><line x1="878.5" y1="9" x2="878.5" y2="11"/><line x1="880.5" y1="9" x2="880.5" y2="11"/><line x1="882.5" y1="9" x2="882.5" y2="11"/><line x1="884.5" y1="0" x2="884.5" y2="11"/><line x1="886.5" y1="9" x2="886.5" y2="11"/><line x1="888.5" y1="9" x2="888.5" y2="11"/><line x1="890.5" y1="9" x2="890.5" y2="11"/><line x1="892.5" y1="9" x2="892.5" y2="11"/><line x1="894.5" y1="6" x2="894.5" y2="11"/><line x1="896.5" y1="9" x2="896.5" y2="11"/><line x1="898.5" y1="9" x2="898.5" y2="11"/><line x1="900.5" y1="9" x2="900.5" y2="11"/><line x1="902.5" y1="9" x2="902.5" y2="11"/><line x1="904.5" y1="0" x2="904.5" y2="11"/><line x1="906.6" y1="9" x2="906.6" y2="11"/><line x1="908.6" y1="9" x2="908.6" y2="11"/><line x1="910.6" y1="9" x2="910.6" y2="11"/><line x1="912.6" y1="9" x2="912.6" y2="11"/><line x1="914.6" y1="6" x2="914.6" y2="11"/><line x1="916.6" y1="9" x2="916.6" y2="11"/><line x1="918.6" y1="9" x2="918.6" y2="11"/><line x1="920.6" y1="9" x2="920.6" y2="11"/><line x1="922.6" y1="9" x2="922.6" y2="11"/><line x1="924.6" y1="0" x2="924.6" y2="11"/><line x1="926.6" y1="9" x2="926.6" y2="11"/><line x1="928.6" y1="9" x2="928.6" y2="11"/><line x1="930.6" y1="9" x2="930.6" y2="11"/><line x1="932.6" y1="9" x2="932.6" y2="11"/><line x1="934.6" y1="6" x2="934.6" y2="11"/><line x1="936.6" y1="9" x2="936.6" y2="11"/><line x1="938.6" y1="9" x2="938.6" y2="11"/><line x1="940.6" y1="9" x2="940.6" y2="11"/><line x1="942.6" y1="9" x2="942.6" y2="11"/><line x1="944.6" y1="0" x2="944.6" y2="11"/><line x1="946.7" y1="9" x2="946.7" y2="11"/><line x1="948.7" y1="9" x2="948.7" y2="11"/><line x1="950.7" y1="9" x2="950.7" y2="11"/><line x1="952.7" y1="9" x2="952.7" y2="11"/><line x1="954.7" y1="6" x2="954.7" y2="11"/><line x1="956.7" y1="9" x2="956.7" y2="11"/><line x1="958.7" y1="9" x2="958.7" y2="11"/><line x1="960.7" y1="9" x2="960.7" y2="11"/><line x1="962.7" y1="9" x2="962.7" y2="11"/><line x1="964.7" y1="0" x2="964.7" y2="11"/><line x1="966.7" y1="9" x2="966.7" y2="11"/><line x1="968.7" y1="9" x2="968.7" y2="11"/><line x1="970.7" y1="9" x2="970.7" y2="11"/><line x1="972.7" y1="9" x2="972.7" y2="11"/><line x1="974.7" y1="6" x2="974.7" y2="11"/><line x1="976.7" y1="9" x2="976.7" y2="11"/><line x1="978.7" y1="9" x2="978.7" y2="11"/><line x1="980.7" y1="9" x2="980.7" y2="11"/><line x1="982.7" y1="9" x2="982.7" y2="11"/><line x1="984.8" y1="0" x2="984.8" y2="11"/><line x1="986.8" y1="9" x2="986.8" y2="11"/><line x1="988.8" y1="9" x2="988.8" y2="11"/><line x1="990.8" y1="9" x2="990.8" y2="11"/><line x1="992.8" y1="9" x2="992.8" y2="11"/><line x1="994.8" y1="6" x2="994.8" y2="11"/><line x1="996.8" y1="9" x2="996.8" y2="11"/><line x1="998.8" y1="9" x2="998.8" y2="11"/><line x1="1000.8" y1="9" x2="1000.8" y2="11"/><line x1="1002.8" y1="9" x2="1002.8" y2="11"/><line x1="1004.8" y1="0" x2="1004.8" y2="11"/><line x1="1006.8" y1="9" x2="1006.8" y2="11"/><line x1="1008.8" y1="9" x2="1008.8" y2="11"/><line x1="1010.8" y1="9" x2="1010.8" y2="11"/><line x1="1012.8" y1="9" x2="1012.8" y2="11"/><line x1="1014.8" y1="6" x2="1014.8" y2="11"/><line x1="1016.8" y1="9" x2="1016.8" y2="11"/><line x1="1018.8" y1="9" x2="1018.8" y2="11"/><line x1="1020.8" y1="9" x2="1020.8" y2="11"/><line x1="1022.8" y1="9" x2="1022.8" y2="11"/><line x1="1024.8" y1="0" x2="1024.8" y2="11"/><line x1="1026.9" y1="9" x2="1026.9" y2="11"/><line x1="1028.9" y1="9" x2="1028.9" y2="11"/><line x1="1030.9" y1="9" x2="1030.9" y2="11"/><line x1="1032.9" y1="9" x2="1032.9" y2="11"/><line x1="1034.9" y1="6" x2="1034.9" y2="11"/><line x1="1036.9" y1="9" x2="1036.9" y2="11"/><line x1="1038.9" y1="9" x2="1038.9" y2="11"/><line x1="1040.9" y1="9" x2="1040.9" y2="11"/><line x1="1042.9" y1="9" x2="1042.9" y2="11"/><line x1="1044.9" y1="0" x2="1044.9" y2="11"/><line x1="1046.9" y1="9" x2="1046.9" y2="11"/><line x1="1048.9" y1="9" x2="1048.9" y2="11"/><line x1="1050.9" y1="9" x2="1050.9" y2="11"/><line x1="1052.9" y1="9" x2="1052.9" y2="11"/><line x1="1054.9" y1="6" x2="1054.9" y2="11"/><line x1="1056.9" y1="9" x2="1056.9" y2="11"/><line x1="1058.9" y1="9" x2="1058.9" y2="11"/><line x1="1060.9" y1="9" x2="1060.9" y2="11"/><line x1="1062.9" y1="9" x2="1062.9" y2="11"/><line x1="1064.9" y1="0" x2="1064.9" y2="11"/><line x1="1067.0" y1="9" x2="1067.0" y2="11"/><line x1="1069.0" y1="9" x2="1069.0" y2="11"/><line x1="1071.0" y1="9" x2="1071.0" y2="11"/><line x1="1073.0" y1="9" x2="1073.0" y2="11"/><line x1="1075.0" y1="6" x2="1075.0" y2="11"/><line x1="1077.0" y1="9" x2="1077.0" y2="11"/><line x1="1079.0" y1="9" x2="1079.0" y2="11"/><line x1="1081.0" y1="9" x2="1081.0" y2="11"/><line x1="1083.0" y1="9" x2="1083.0" y2="11"/><line x1="1085.0" y1="0" x2="1085.0" y2="11"/><line x1="1087.0" y1="9" x2="1087.0" y2="11"/><line x1="1089.0" y1="9" x2="1089.0" y2="11"/><line x1="1091.0" y1="9" x2="1091.0" y2="11"/></g><g fill="#e4e4e4" font-family="Liberation Sans" font-size="7" font-weight="bold"><text x="3.8" y="7" textLength="10.2" lengthAdjust="spacingAndGlyphs">160</text><text x="23.9" y="7" textLength="10.2" lengthAdjust="spacingAndGlyphs">150</text><text x="43.9" y="7" textLength="10.2" lengthAdjust="spacingAndGlyphs">140</text><text x="64.0" y="7" textLength="10.2" lengthAdjust="spacingAndGlyphs">130</text><text x="84.0" y="7" textLength="10.2" lengthAdjust="spacingAndGlyphs">120</text><text x="104.1" y="7" textLength="10.2" lengthAdjust="spacingAndGlyphs">110</text><text x="124.1" y="7" textLength="10.2" lengthAdjust="spacingAndGlyphs">100</text><text x="144.2" y="7" textLength="6.8" lengthAdjust="spacingAndGlyphs">90</text><text x="164.2" y="7" textLength="6.8" lengthAdjust="spacingAndGlyphs">80</text><text x="184.3" y="7" textLength="6.8" lengthAdjust="spacingAndGlyphs">70</text><text x="204.3" y="7" textLength="6.8" lengthAdjust="spacingAndGlyphs">60</text><text x="224.4" y="7" textLength="6.8" lengthAdjust="spacingAndGlyphs">50</text><text x="244.4" y="7" textLength="6.8" lengthAdjust="spacingAndGlyphs">40</text><text x="264.5" y="7" textLength="6.8" lengthAdjust="spacingAndGlyphs">30</text><text x="284.5" y="7" textLength="6.8" lengthAdjust="spacingAndGlyphs">20</text><text x="304.6" y="7" textLength="6.8" lengthAdjust="spacingAndGlyphs">10</text><text x="324.6" y="7" textLength="3.4" lengthAdjust="spacingAndGlyphs">0</text><text x="344.7" y="7" textLength="6.8" lengthAdjust="spacingAndGlyphs">10</text><text x="364.7" y="7" textLength="6.8" lengthAdjust="spacingAndGlyphs">20</text><text x="384.8" y="7" textLength="6.8" lengthAdjust="spacingAndGlyphs">30</text><text x="404.8" y="7" textLength="6.8" lengthAdjust="spacingAndGlyphs">40</text><text x="424.9" y="7" textLength="6.8" lengthAdjust="spacingAndGlyphs">50</text><text x="444.9" y="7" textLength="6.8" lengthAdjust="spacingAndGlyphs">60</text><text x="465.0" y="7" textLength="6.8" lengthAdjust="spacingAndGlyphs">70</text><text x="485.0" y="7" textLength="6.8" lengthAdjust="spacingAndGlyphs">80</text><text x="505.1" y="7" textLength="6.8" lengthAdjust="spacingAndGlyphs">90</text><text x="525.1" y="7" textLength="10.2" lengthAdjust="spacingAndGlyphs">100</text><text x="545.1" y="7" textLength="10.2" lengthAdjust="spacingAndGlyphs">110</text><text x="565.2" y="7" textLength="10.2" lengthAdjust="spacingAndGlyphs">120</text><text x="585.2" y="7" textLength="10.2" lengthAdjust="spacingAndGlyphs">130</text><text x="605.3" y="7" textLength="10.2" lengthAdjust="spacingAndGlyphs">140</text><text x="625.4" y="7" textLength="10.2" lengthAdjust="spacingAndGlyphs">150</text><text x="645.4" y="7" textLength="10.2" lengthAdjust="spacingAndGlyphs">160</text><text x="665.5" y="7" textLength="10.2" lengthAdjust="spacingAndGlyphs">170</text><text x="685.5" y="7" textLength="10.2" lengthAdjust="spacingAndGlyphs">180</text><text x="705.5" y="7" textLength="10.2" lengthAdjust="spacingAndGlyphs">190</text><text x="725.6" y="7" textLength="10.2" lengthAdjust="spacingAndGlyphs">200</text><text x="745.6" y="7" textLength="10.2" lengthAdjust="spacingAndGlyphs">210</text><text x="765.7" y="7" textLength="10.2" lengthAdjust="spacingAndGlyphs">220</text><text x="785.8" y="7" textLength="10.2" lengthAdjust="spacingAndGlyphs">230</text><text x="805.8" y="7" textLength="10.2" lengthAdjust="spacingAndGlyphs">240</text><text x="825.9" y="7" textLength="10.2" lengthAdjust="spacingAndGlyphs">250</text><text x="845.9" y="7" textLength="10.2" lengthAdjust="spacingAndGlyphs">260</text><text x="866.0" y="7" textLength="10.2" lengthAdjust="spacingAndGlyphs">270</text><text x="886.0" y="7" textLength="10.2" lengthAdjust="spacingAndGlyphs">280</text><text x="906.0" y="7" textLength="10.2" lengthAdjust="spacingAndGlyphs">290</text><text x="926.1" y="7" textLength="10.2" lengthAdjust="spacingAndGlyphs">300</text><text x="946.1" y="7" textLength="10.2" lengthAdjust="spacingAndGlyphs">310</text><text x="966.2" y="7" textLength="10.2" lengthAdjust="spacingAndGlyphs">320</text><text x="986.2" y="7" textLength="10.2" lengthAdjust="spacingAndGlyphs">330</text><text x="1006.3" y="7" textLength="10.2" lengthAdjust="spacingAndGlyphs">340</text><text x="1026.3" y="7" textLength="10.2" lengthAdjust="spacingAndGlyphs">350</text><text x="1046.4" y="7" textLength="10.2" lengthAdjust="spacingAndGlyphs">360</text><text x="1066.4" y="7" textLength="10.2" lengthAdjust="spacingAndGlyphs">370</text><text x="1086.5" y="7" textLength="10.2" lengthAdjust="spacingAndGlyphs">380</text></g></svg></div>
<div id="vruler" class="a" style="overflow:hidden"><svg class="a" style="left:0;top:0" width="14" height="369"><g stroke="#5a5a5a" stroke-width="1"><line x1="9" y1="-19.5" x2="11" y2="-19.5"/><line x1="9" y1="-17.5" x2="11" y2="-17.5"/><line x1="9" y1="-15.5" x2="11" y2="-15.5"/><line x1="9" y1="-13.5" x2="11" y2="-13.5"/><line x1="0" y1="-11.5" x2="11" y2="-11.5"/><line x1="9" y1="-9.4" x2="11" y2="-9.4"/><line x1="9" y1="-7.4" x2="11" y2="-7.4"/><line x1="9" y1="-5.4" x2="11" y2="-5.4"/><line x1="9" y1="-3.4" x2="11" y2="-3.4"/><line x1="7" y1="-1.4" x2="11" y2="-1.4"/><line x1="9" y1="0.6" x2="11" y2="0.6"/><line x1="9" y1="2.6" x2="11" y2="2.6"/><line x1="9" y1="4.6" x2="11" y2="4.6"/><line x1="9" y1="6.6" x2="11" y2="6.6"/><line x1="0" y1="8.6" x2="11" y2="8.6"/><line x1="9" y1="10.6" x2="11" y2="10.6"/><line x1="9" y1="12.6" x2="11" y2="12.6"/><line x1="9" y1="14.6" x2="11" y2="14.6"/><line x1="9" y1="16.6" x2="11" y2="16.6"/><line x1="7" y1="18.6" x2="11" y2="18.6"/><line x1="9" y1="20.6" x2="11" y2="20.6"/><line x1="9" y1="22.6" x2="11" y2="22.6"/><line x1="9" y1="24.6" x2="11" y2="24.6"/><line x1="9" y1="26.6" x2="11" y2="26.6"/><line x1="0" y1="28.6" x2="11" y2="28.6"/><line x1="9" y1="30.7" x2="11" y2="30.7"/><line x1="9" y1="32.7" x2="11" y2="32.7"/><line x1="9" y1="34.7" x2="11" y2="34.7"/><line x1="9" y1="36.7" x2="11" y2="36.7"/><line x1="7" y1="38.7" x2="11" y2="38.7"/><line x1="9" y1="40.7" x2="11" y2="40.7"/><line x1="9" y1="42.7" x2="11" y2="42.7"/><line x1="9" y1="44.7" x2="11" y2="44.7"/><line x1="9" y1="46.7" x2="11" y2="46.7"/><line x1="0" y1="48.7" x2="11" y2="48.7"/><line x1="9" y1="50.7" x2="11" y2="50.7"/><line x1="9" y1="52.7" x2="11" y2="52.7"/><line x1="9" y1="54.7" x2="11" y2="54.7"/><line x1="9" y1="56.7" x2="11" y2="56.7"/><line x1="7" y1="58.7" x2="11" y2="58.7"/><line x1="9" y1="60.7" x2="11" y2="60.7"/><line x1="9" y1="62.7" x2="11" y2="62.7"/><line x1="9" y1="64.7" x2="11" y2="64.7"/><line x1="9" y1="66.7" x2="11" y2="66.7"/><line x1="0" y1="68.8" x2="11" y2="68.8"/><line x1="9" y1="70.8" x2="11" y2="70.8"/><line x1="9" y1="72.8" x2="11" y2="72.8"/><line x1="9" y1="74.8" x2="11" y2="74.8"/><line x1="9" y1="76.8" x2="11" y2="76.8"/><line x1="7" y1="78.8" x2="11" y2="78.8"/><line x1="9" y1="80.8" x2="11" y2="80.8"/><line x1="9" y1="82.8" x2="11" y2="82.8"/><line x1="9" y1="84.8" x2="11" y2="84.8"/><line x1="9" y1="86.8" x2="11" y2="86.8"/><line x1="0" y1="88.8" x2="11" y2="88.8"/><line x1="9" y1="90.8" x2="11" y2="90.8"/><line x1="9" y1="92.8" x2="11" y2="92.8"/><line x1="9" y1="94.8" x2="11" y2="94.8"/><line x1="9" y1="96.8" x2="11" y2="96.8"/><line x1="7" y1="98.8" x2="11" y2="98.8"/><line x1="9" y1="100.8" x2="11" y2="100.8"/><line x1="9" y1="102.8" x2="11" y2="102.8"/><line x1="9" y1="104.8" x2="11" y2="104.8"/><line x1="9" y1="106.8" x2="11" y2="106.8"/><line x1="0" y1="108.8" x2="11" y2="108.8"/><line x1="9" y1="110.9" x2="11" y2="110.9"/><line x1="9" y1="112.9" x2="11" y2="112.9"/><line x1="9" y1="114.9" x2="11" y2="114.9"/><line x1="9" y1="116.9" x2="11" y2="116.9"/><line x1="7" y1="118.9" x2="11" y2="118.9"/><line x1="9" y1="120.9" x2="11" y2="120.9"/><line x1="9" y1="122.9" x2="11" y2="122.9"/><line x1="9" y1="124.9" x2="11" y2="124.9"/><line x1="9" y1="126.9" x2="11" y2="126.9"/><line x1="0" y1="128.9" x2="11" y2="128.9"/><line x1="9" y1="130.9" x2="11" y2="130.9"/><line x1="9" y1="132.9" x2="11" y2="132.9"/><line x1="9" y1="134.9" x2="11" y2="134.9"/><line x1="9" y1="136.9" x2="11" y2="136.9"/><line x1="7" y1="138.9" x2="11" y2="138.9"/><line x1="9" y1="140.9" x2="11" y2="140.9"/><line x1="9" y1="142.9" x2="11" y2="142.9"/><line x1="9" y1="144.9" x2="11" y2="144.9"/><line x1="9" y1="146.9" x2="11" y2="146.9"/><line x1="0" y1="148.9" x2="11" y2="148.9"/><line x1="9" y1="151.0" x2="11" y2="151.0"/><line x1="9" y1="153.0" x2="11" y2="153.0"/><line x1="9" y1="155.0" x2="11" y2="155.0"/><line x1="9" y1="157.0" x2="11" y2="157.0"/><line x1="7" y1="159.0" x2="11" y2="159.0"/><line x1="9" y1="161.0" x2="11" y2="161.0"/><line x1="9" y1="163.0" x2="11" y2="163.0"/><line x1="9" y1="165.0" x2="11" y2="165.0"/><line x1="9" y1="167.0" x2="11" y2="167.0"/><line x1="0" y1="169.0" x2="11" y2="169.0"/><line x1="9" y1="171.0" x2="11" y2="171.0"/><line x1="9" y1="173.0" x2="11" y2="173.0"/><line x1="9" y1="175.0" x2="11" y2="175.0"/><line x1="9" y1="177.0" x2="11" y2="177.0"/><line x1="7" y1="179.0" x2="11" y2="179.0"/><line x1="9" y1="181.0" x2="11" y2="181.0"/><line x1="9" y1="183.0" x2="11" y2="183.0"/><line x1="9" y1="185.0" x2="11" y2="185.0"/><line x1="9" y1="187.0" x2="11" y2="187.0"/><line x1="0" y1="189.0" x2="11" y2="189.0"/><line x1="9" y1="191.1" x2="11" y2="191.1"/><line x1="9" y1="193.1" x2="11" y2="193.1"/><line x1="9" y1="195.1" x2="11" y2="195.1"/><line x1="9" y1="197.1" x2="11" y2="197.1"/><line x1="7" y1="199.1" x2="11" y2="199.1"/><line x1="9" y1="201.1" x2="11" y2="201.1"/><line x1="9" y1="203.1" x2="11" y2="203.1"/><line x1="9" y1="205.1" x2="11" y2="205.1"/><line x1="9" y1="207.1" x2="11" y2="207.1"/><line x1="0" y1="209.1" x2="11" y2="209.1"/><line x1="9" y1="211.1" x2="11" y2="211.1"/><line x1="9" y1="213.1" x2="11" y2="213.1"/><line x1="9" y1="215.1" x2="11" y2="215.1"/><line x1="9" y1="217.1" x2="11" y2="217.1"/><line x1="7" y1="219.1" x2="11" y2="219.1"/><line x1="9" y1="221.1" x2="11" y2="221.1"/><line x1="9" y1="223.1" x2="11" y2="223.1"/><line x1="9" y1="225.1" x2="11" y2="225.1"/><line x1="9" y1="227.1" x2="11" y2="227.1"/><line x1="0" y1="229.1" x2="11" y2="229.1"/><line x1="9" y1="231.2" x2="11" y2="231.2"/><line x1="9" y1="233.2" x2="11" y2="233.2"/><line x1="9" y1="235.2" x2="11" y2="235.2"/><line x1="9" y1="237.2" x2="11" y2="237.2"/><line x1="7" y1="239.2" x2="11" y2="239.2"/><line x1="9" y1="241.2" x2="11" y2="241.2"/><line x1="9" y1="243.2" x2="11" y2="243.2"/><line x1="9" y1="245.2" x2="11" y2="245.2"/><line x1="9" y1="247.2" x2="11" y2="247.2"/><line x1="0" y1="249.2" x2="11" y2="249.2"/><line x1="9" y1="251.2" x2="11" y2="251.2"/><line x1="9" y1="253.2" x2="11" y2="253.2"/><line x1="9" y1="255.2" x2="11" y2="255.2"/><line x1="9" y1="257.2" x2="11" y2="257.2"/><line x1="7" y1="259.2" x2="11" y2="259.2"/><line x1="9" y1="261.2" x2="11" y2="261.2"/><line x1="9" y1="263.2" x2="11" y2="263.2"/><line x1="9" y1="265.2" x2="11" y2="265.2"/><line x1="9" y1="267.2" x2="11" y2="267.2"/><line x1="0" y1="269.2" x2="11" y2="269.2"/><line x1="9" y1="271.3" x2="11" y2="271.3"/><line x1="9" y1="273.3" x2="11" y2="273.3"/><line x1="9" y1="275.3" x2="11" y2="275.3"/><line x1="9" y1="277.3" x2="11" y2="277.3"/><line x1="7" y1="279.3" x2="11" y2="279.3"/><line x1="9" y1="281.3" x2="11" y2="281.3"/><line x1="9" y1="283.3" x2="11" y2="283.3"/><line x1="9" y1="285.3" x2="11" y2="285.3"/><line x1="9" y1="287.3" x2="11" y2="287.3"/><line x1="0" y1="289.3" x2="11" y2="289.3"/><line x1="9" y1="291.3" x2="11" y2="291.3"/><line x1="9" y1="293.3" x2="11" y2="293.3"/><line x1="9" y1="295.3" x2="11" y2="295.3"/><line x1="9" y1="297.3" x2="11" y2="297.3"/><line x1="7" y1="299.3" x2="11" y2="299.3"/><line x1="9" y1="301.3" x2="11" y2="301.3"/><line x1="9" y1="303.3" x2="11" y2="303.3"/><line x1="9" y1="305.3" x2="11" y2="305.3"/><line x1="9" y1="307.3" x2="11" y2="307.3"/><line x1="0" y1="309.4" x2="11" y2="309.4"/><line x1="9" y1="311.4" x2="11" y2="311.4"/><line x1="9" y1="313.4" x2="11" y2="313.4"/><line x1="9" y1="315.4" x2="11" y2="315.4"/><line x1="9" y1="317.4" x2="11" y2="317.4"/><line x1="7" y1="319.4" x2="11" y2="319.4"/><line x1="9" y1="321.4" x2="11" y2="321.4"/><line x1="9" y1="323.4" x2="11" y2="323.4"/><line x1="9" y1="325.4" x2="11" y2="325.4"/><line x1="9" y1="327.4" x2="11" y2="327.4"/><line x1="0" y1="329.4" x2="11" y2="329.4"/><line x1="9" y1="331.4" x2="11" y2="331.4"/><line x1="9" y1="333.4" x2="11" y2="333.4"/><line x1="9" y1="335.4" x2="11" y2="335.4"/><line x1="9" y1="337.4" x2="11" y2="337.4"/><line x1="7" y1="339.4" x2="11" y2="339.4"/><line x1="9" y1="341.4" x2="11" y2="341.4"/><line x1="9" y1="343.4" x2="11" y2="343.4"/><line x1="9" y1="345.4" x2="11" y2="345.4"/><line x1="9" y1="347.4" x2="11" y2="347.4"/><line x1="0" y1="349.4" x2="11" y2="349.4"/><line x1="9" y1="351.5" x2="11" y2="351.5"/><line x1="9" y1="353.5" x2="11" y2="353.5"/><line x1="9" y1="355.5" x2="11" y2="355.5"/><line x1="9" y1="357.5" x2="11" y2="357.5"/><line x1="7" y1="359.5" x2="11" y2="359.5"/><line x1="9" y1="361.5" x2="11" y2="361.5"/><line x1="9" y1="363.5" x2="11" y2="363.5"/><line x1="9" y1="365.5" x2="11" y2="365.5"/><line x1="9" y1="367.5" x2="11" y2="367.5"/><line x1="0" y1="369.5" x2="11" y2="369.5"/></g><g fill="#c8c8c8" font-family="Liberation Sans" font-size="6"><text x="4" y="-5.5" text-anchor="middle">1</text><text x="4" y="0.0" text-anchor="middle">1</text><text x="4" y="5.5" text-anchor="middle">0</text><text x="4" y="14.6" text-anchor="middle">1</text><text x="4" y="20.1" text-anchor="middle">2</text><text x="4" y="25.6" text-anchor="middle">0</text><text x="4" y="34.6" text-anchor="middle">1</text><text x="4" y="40.1" text-anchor="middle">3</text><text x="4" y="45.6" text-anchor="middle">0</text><text x="4" y="54.7" text-anchor="middle">1</text><text x="4" y="60.2" text-anchor="middle">4</text><text x="4" y="65.7" text-anchor="middle">0</text><text x="4" y="74.8" text-anchor="middle">1</text><text x="4" y="80.2" text-anchor="middle">5</text><text x="4" y="85.8" text-anchor="middle">0</text><text x="4" y="94.8" text-anchor="middle">1</text><text x="4" y="100.3" text-anchor="middle">6</text><text x="4" y="105.8" text-anchor="middle">0</text><text x="4" y="114.8" text-anchor="middle">1</text><text x="4" y="120.3" text-anchor="middle">7</text><text x="4" y="125.8" text-anchor="middle">0</text><text x="4" y="134.9" text-anchor="middle">1</text><text x="4" y="140.4" text-anchor="middle">8</text><text x="4" y="145.9" text-anchor="middle">0</text><text x="4" y="154.9" text-anchor="middle">1</text><text x="4" y="160.4" text-anchor="middle">9</text><text x="4" y="165.9" text-anchor="middle">0</text><text x="4" y="175.0" text-anchor="middle">2</text><text x="4" y="180.5" text-anchor="middle">0</text><text x="4" y="186.0" text-anchor="middle">0</text><text x="4" y="195.0" text-anchor="middle">2</text><text x="4" y="200.5" text-anchor="middle">1</text><text x="4" y="206.0" text-anchor="middle">0</text><text x="4" y="215.1" text-anchor="middle">2</text><text x="4" y="220.6" text-anchor="middle">2</text><text x="4" y="226.1" text-anchor="middle">0</text><text x="4" y="235.1" text-anchor="middle">2</text><text x="4" y="240.6" text-anchor="middle">3</text><text x="4" y="246.1" text-anchor="middle">0</text><text x="4" y="255.2" text-anchor="middle">2</text><text x="4" y="260.7" text-anchor="middle">4</text><text x="4" y="266.2" text-anchor="middle">0</text><text x="4" y="275.2" text-anchor="middle">2</text><text x="4" y="280.8" text-anchor="middle">5</text><text x="4" y="286.2" text-anchor="middle">0</text><text x="4" y="295.3" text-anchor="middle">2</text><text x="4" y="300.8" text-anchor="middle">6</text><text x="4" y="306.3" text-anchor="middle">0</text><text x="4" y="315.4" text-anchor="middle">2</text><text x="4" y="320.9" text-anchor="middle">7</text><text x="4" y="326.4" text-anchor="middle">0</text><text x="4" y="335.4" text-anchor="middle">2</text><text x="4" y="340.9" text-anchor="middle">8</text><text x="4" y="346.4" text-anchor="middle">0</text><text x="4" y="355.4" text-anchor="middle">2</text><text x="4" y="360.9" text-anchor="middle">9</text><text x="4" y="366.4" text-anchor="middle">0</text><text x="4" y="375.5" text-anchor="middle">3</text><text x="4" y="381.0" text-anchor="middle">0</text><text x="4" y="386.5" text-anchor="middle">0</text></g></svg><div class="a" style="left:11px;top:0;width:3px;height:369px;background:linear-gradient(90deg,#3a3a3a,#5a5a5a)"></div></div>
<div id="tools" class="a"><div class="a" style="left:11px;top:4px;width:15px;height:1px;background:#2a2a2a"></div><div class="a" style="left:5px;top:10px;width:13px;height:14px;background:#2e2e2e"></div><svg class="a" style="left:0;top:0" width="37" height="250" viewBox="0 77 37 250"><defs><linearGradient id="tg1"><stop offset="0" stop-color="#eee"/><stop offset="1" stop-color="#444"/></linearGradient></defs><g fill="none" stroke="#d6d6d6" stroke-width="1"><path d="M7 88 L7 98 L9.5 95.5 L11.5 99 L13 98 L11 94.5 L14 94 Z" fill="#222"/><path d="M23 88 L23 98 L25.5 95.5 L27.5 99 L29 98 L27 94.5 L30 94 Z" fill="#d6d6d6"/><path d="M6.5 101.5 h5 l2.5 2.5 v8 h-7.5 z" fill="#c8c8c8" stroke="none"/><path d="M11.5 101.5 v3 h3" stroke="#888"/><path d="M12 108 l3 3 l-3 1 z" fill="#eee" stroke="none"/><path d="M21.5 102 v10 M33.5 102 v10 M23 107.5 h9" /><path d="M25 105.5 l-2 2 l2 2 M30 105.5 l2 2 l-2 2" /><path d="M6.5 118.5 v9 h9 v-9 M6.5 123.5 h9 M6.5 125.5 h9 M9.5 123.5 v4 M12.5 123.5 v4" /><path d="M8 117 l2 2 l1.5 -2.5" stroke-width="1.5"/><path d="M22.5 118.5 v9 h9 v-9 M22.5 123.5 h9 M22.5 125.5 h9 M25.5 123.5 v4 M28.5 123.5 v4" /><path d="M29 119 l3 -3" stroke-width="2"/><path d="M5 131.5 h27" stroke="#3a3a3a"/><path d="M6.5 137.5 v-1 h8 v1 M10.5 136.5 v8.5 M9 145.5 h3" stroke-width="1"/><path d="M22.5 144.5 L32 136" stroke-width="1.2"/><circle cx="16.5" cy="145" r="1" fill="#eee" stroke="none"/><path d="M6 160 L7.5 153.5 L12 149.5 L15.5 153 L11.5 157.5 Z" fill="#c4c4c4" stroke="none"/><path d="M12 150 l3.5 3.5" stroke="#eee"/><path d="M21.5 160 L23 156 L29.5 149.5 L32 152 L25.5 158.5 Z" fill="#b0b0b0" stroke="none"/><path d="M29.5 149.5 L32 152" stroke="#eee" stroke-width="1.5"/><path d="M15 160.5 l2 -2 v2 z M31.5 160.5 l2 -2 v2 z" fill="#eee" stroke="none"/><rect x="6" y="164" width="10" height="9" fill="#9a9a9a" stroke="none"/><path d="M6.5 164.5 h9 v8 h-9 z M7 165 l8 7 M15 165 l-8 7" stroke="#d8d8d8"/><rect x="22.5" y="164.5" width="9.5" height="8" fill="#7c7c7c" stroke="#c8c8c8"/><circle cx="16.5" cy="173.5" r="1" fill="#eee" stroke="none"/><circle cx="33" cy="173.5" r="1" fill="#eee" stroke="none"/><path d="M5 178 h27" stroke="#3a3a3a"/><path d="M5.5 183 L13 189.5 M5.5 190.5 L13 184" stroke="#d8d8d8"/><circle cx="14.5" cy="183.5" r="1.6"/><circle cx="14.5" cy="190" r="1.6"/><path d="M22.5 182 L22.5 191 L24.5 189 L26 192 L27 191.5 L25.5 188.5 L28 188 Z" fill="#cfcfcf" stroke="none"/><path d="M27.5 182.5 h5 v8 h-3" stroke="#bbb" stroke-dasharray="1.5 1.5"/><rect x="5.5" y="197.5" width="11" height="7" fill="url(#tg1)" stroke="#d8d8d8"/><rect x="22.5" y="197.5" width="11" height="7" fill="#bbb" stroke="#d8d8d8"/><path d="M23 201.5 l1.5 -1.5 l1.5 1.5 l1.5 -1.5 l1.5 1.5 l1.5 -1.5 l1.5 1.5 v2.5 h-9z" fill="#333" stroke="none"/><path d="M5 209.5 h27" stroke="#3a3a3a"/><path d="M6.5 215.5 h9 v6 l-3 3 h-6 z" fill="#a0a0a0" stroke="#d0d0d0"/><path d="M9 218 h4 v3 h-4z" fill="#666" stroke="none"/><path d="M12.5 224.5 v-3 h3" stroke="#eee"/><path d="M23.5 224.5 L30 218" stroke-width="1.6"/><path d="M28.5 216.5 L32 220" stroke-width="2.4" stroke="#e0e0e0"/><circle cx="32" cy="224" r="0.9" fill="#eee" stroke="none"/><path d="M7.5 234 v-4.5 M9.5 233 v-5 M11.5 233 v-5 M13.5 233.5 v-4" stroke-width="1.4" stroke="#d0d0d0"/><path d="M6 233.5 L8 238.5 H13.5 L15.5 233 V232 L13 234 Z" fill="#d0d0d0" stroke="none"/><path d="M7 232 h7 v3 h-7z" fill="#d0d0d0" stroke="none"/><circle cx="26.5" cy="231" r="3.3" stroke-width="1.3" fill="#555"/><path d="M28.8 233.5 L32.5 237.5" stroke-width="2.2"/><path d="M5 243.5 h27" stroke="#3a3a3a"/></g></svg><div class="a" style="left:13px;top:180px;width:18px;height:18px;background:#000"><div class="a" style="left:3px;top:3px;width:12px;height:12px;background:#3d3d3d;border:1px solid #888"></div></div><div class="a" style="left:5px;top:171px;width:19px;height:18px;background:#1d9be2"></div><div class="a" style="left:27px;top:171px;color:#ccc;font:7px/7px 'Liberation Sans',sans-serif">&#x21B0;</div><div class="a" style="left:5px;top:193px;width:6px;height:6px;background:#000;border:1px solid #ccc"></div><div class="a" style="left:3px;top:201px;width:31px;height:1px;background:#383838"></div><div class="a" style="left:9px;top:206px;width:7px;height:7px;border:1px solid #ddd;background:#444"></div><div class="a" style="left:22px;top:203px;color:#ddd;font:bold 9px/12px 'Liberation Serif',serif">T</div><div class="a" style="left:3px;top:216px;width:31px;height:1px;background:#383838"></div><div class="a" style="left:3px;top:218px;width:11px;height:10px;background:#2c2c2c"></div><div class="a" style="left:5px;top:220px;width:7px;height:7px;background:#1d9be2"></div><div class="a" style="left:16px;top:220px;width:5px;height:7px;background:linear-gradient(90deg,#fff,#777)"></div><div class="a" style="left:27px;top:220px;width:7px;height:7px;background:linear-gradient(135deg,#fff 40%,#c8203a 40% 60%,#fff 60%)"></div><div class="a" style="left:3px;top:230px;width:31px;height:1px;background:#383838"></div><div class="a" style="left:3px;top:234px;width:15px;height:13px;background:#2f2f2f"></div><div class="a" style="left:7px;top:236px;width:8px;height:8px;border:1px solid #ddd;background:#777"></div><div class="a" style="left:24px;top:236px;width:8px;height:8px;border:1px solid #ccc;border-top-width:2px;background:#555"></div></div>
<div class="a" style="left:1129px;top:88px;width:11px;height:608px;background:#383838;border-left:1px solid #2e2e2e"></div><div class="a" style="left:1132px;top:82px;width:0;height:0;border-style:solid;border-width:0 3.5px 4px 3.5px;border-color:transparent transparent #e8e8e8 transparent"></div><div class="a" style="left:1130px;top:146px;width:10px;height:482px;background:linear-gradient(90deg,#b0b0b0,#979797)"></div><div class="a" style="left:0;top:695px;width:1141px;height:1px;background:#4a4a4a"></div><div class="a" style="left:0;top:696px;width:1141px;height:10px;background:#3d3d3d"></div><div class="a" style="left:12px;top:697px;width:13px;height:7px;background:#a8a8a8;font:bold 6px/7px 'Liberation Sans',sans-serif;color:#222;padding-left:2px">0 1</div><div class="a" style="left:31px;top:697px;font:8px/8px 'Liberation Sans',sans-serif;color:#777">&#x2758;&#x25C2; &#x25C2;</div><div class="a" style="left:50px;top:697px;font:7px/9px 'Liberation Sans',sans-serif;color:#ddd">1</div><div class="a" style="left:104px;top:699px;width:0;height:0;border-style:solid;border-width:4px 3px 0 3px;border-color:#e0e0e0 transparent transparent transparent"></div><div class="a" style="left:116px;top:697px;font:8px/8px 'Liberation Sans',sans-serif;color:#777">&#x25B8; &#x25B8;&#x2758;</div><div class="a" style="left:136px;top:697px;width:9px;height:8px;border-radius:50%;background:#ccc"></div><div class="a" style="left:153px;top:697px;font:7px/9px 'Liberation Sans',sans-serif;color:#cfcfcf;letter-spacing:-0.2px">[Basic] [working]</div><div class="a" style="left:222px;top:699px;width:0;height:0;border-style:solid;border-width:4px 3px 0 3px;border-color:#e0e0e0 transparent transparent transparent"></div><div class="a" style="left:233px;top:697px;width:7px;height:7px;border-radius:50%;background:#3fae3f"></div><div class="a" style="left:243px;top:697px;font:7px/9px 'Liberation Sans',sans-serif;color:#cfcfcf;letter-spacing:-0.2px">No errors</div><div class="a" style="left:283px;top:700px;width:0;height:0;border-style:solid;border-width:3px 2px 0 2px;border-color:#cfcfcf transparent transparent transparent"></div><div class="a" style="left:290px;top:696px;width:839px;height:10px;background:#363636"></div><div class="a" style="left:294px;top:698px;width:0;height:0;border-style:solid;border-width:3px 4px 3px 0;border-color:transparent #ddd transparent transparent"></div><div class="a" style="left:537px;top:696px;width:530px;height:9px;background:linear-gradient(180deg,#a6a6a6,#929292)"></div><div class="a" style="left:1107px;top:698px;width:0;height:0;border-style:solid;border-width:3px 0 3px 4px;border-color:transparent transparent transparent #ddd"></div><div class="a" style="left:1114px;top:697px;width:9px;height:7px;border:1px solid #ccc;background:linear-gradient(90deg,#444 0 3px,#ccc 3px 4px,#444 4px)"></div><div class="a" style="left:0;top:705px;width:1141px;height:2px;background:#353535"></div><div class="a" style="left:0;top:707px;width:1280px;height:13px;background:#4a4a4a"></div>
<div id="rpanel" class="a"></div><div class="a" style="left:1141px;top:65px;width:139px;height:8px;background:#333"></div><div class="a" style="left:1272px;top:64px;font:7px/9px 'Liberation Sans',sans-serif;color:#ccc;white-space:nowrap;">&#x00BB;</div><div class="a" style="left:1139px;top:65px;width:2px;height:641px;background:#2b2b2b"></div><div class="a" style="left:1141px;top:73px;width:139px;height:11px;background:#383838"></div><div class="a" style="left:1142px;top:73px;width:30px;height:11px;background:#4a4a4a"></div><div class="a" style="left:1144px;top:74px;font:7px/9px 'Liberation Sans',sans-serif;color:#e8e8e8;white-space:nowrap;font-weight:bold;letter-spacing:-0.2px">&#x21D5;Pages</div><div class="a" style="left:1177px;top:74px;font:7px/9px 'Liberation Sans',sans-serif;color:#a8a8a8;white-space:nowrap;">Layers</div><div class="a" style="left:1201px;top:74px;width:1px;height:9px;background:#2e2e2e"></div><div class="a" style="left:1207px;top:74px;font:7px/9px 'Liberation Sans',sans-serif;color:#a8a8a8;white-space:nowrap;">Links</div><div class="a" style="left:1268px;top:77px;width:0;height:0;border-style:solid;border-width:3px 2px 0 2px;border-color:#ccc transparent transparent transparent"></div><div class="a" style="left:1272px;top:75px;width:5px;height:6px;background:#8a8a8a"></div><div class="a" style="left:1141px;top:84px;width:139px;height:224px;background:#474747"></div><div class="a" style="left:1144px;top:91px;font:7px/9px 'Liberation Sans',sans-serif;color:#d0d0d0;white-space:nowrap;">[None]</div><div class="a" style="left:1254px;top:87px;width:11px;height:16px;background:#fff"></div><div class="a" style="left:1144px;top:110px;font:7px/9px 'Liberation Sans',sans-serif;color:#d0d0d0;white-space:nowrap;letter-spacing:-0.3px">A-Master</div><div class="a" style="left:1243px;top:106px;width:10px;height:16px;background:#fff"></div><div class="a" style="left:1254px;top:106px;width:11px;height:16px;background:#fff"></div><div class="a" style="left:1271px;top:84px;width:9px;height:41px;background:#3f3f3f"></div><div class="a" style="left:1273px;top:88px;width:0;height:0;border-style:solid;border-width:0 3px 3px 3px;border-color:transparent transparent #888 transparent"></div><div class="a" style="left:1273px;top:118px;width:0;height:0;border-style:solid;border-width:3px 3px 0 3px;border-color:#888 transparent transparent transparent"></div><div class="a" style="left:1141px;top:125px;width:139px;height:2px;background:#3a3a3a;border-bottom:1px solid #525252"></div><div class="a" style="left:1206px;top:129px;width:17px;height:29px;background:#b9bdc2;border-top:4px solid #6e7074"></div><div class="a" style="left:1217px;top:131px;font:7px/9px 'Liberation Sans',sans-serif;color:#111;white-space:nowrap;font-weight:bold">A</div><div class="a" style="left:1210px;top:161px;width:7px;height:8px;background:#3b4a66"></div><div class="a" style="left:1211px;top:160px;font:7px/9px 'Liberation Sans',sans-serif;color:#fff;white-space:nowrap;font-weight:bold">1</div><div class="a" style="left:1271px;top:128px;width:9px;height:180px;background:#3f3f3f"></div><div class="a" style="left:1273px;top:132px;width:0;height:0;border-style:solid;border-width:0 3px 3px 3px;border-color:transparent transparent #888 transparent"></div><div class="a" style="left:1273px;top:302px;width:0;height:0;border-style:solid;border-width:3px 3px 0 3px;border-color:#888 transparent transparent transparent"></div><div class="a" style="left:1141px;top:308px;width:139px;height:14px;background:#484848;border-top:1px solid #3c3c3c"></div><div class="a" style="left:1144px;top:310px;font:7px/9px 'Liberation Sans',sans-serif;color:#d8d8d8;white-space:nowrap;letter-spacing:-0.3px">1 Page in 1 Spread</div><div class="a" style="left:1212px;top:312px;width:11px;height:6px;background:#ddd;border-top:2px solid #777"></div><div class="a" style="left:1235px;top:311px;width:7px;height:8px;background:#e0e0e0;border:1px solid #777"></div><div class="a" style="left:1254px;top:311px;width:7px;height:8px;border:1px solid #777"></div><div class="a" style="left:1141px;top:322px;width:139px;height:2px;background:#2c2c2c"></div><div class="a" style="left:1141px;top:324px;width:139px;height:11px;background:#353535"></div><div class="a" style="left:1142px;top:324px;width:34px;height:11px;background:#4a4a4a"></div><div class="a" style="left:1144px;top:324px;font:7px/9px 'Liberation Sans',sans-serif;color:#e8e8e8;white-space:nowrap;font-weight:bold;letter-spacing:-0.1px">&#x21D5;Stroke</div><div class="a" style="left:1176px;top:324px;width:31px;height:11px;background:#2f2f2f"></div><div class="a" style="left:1180px;top:324px;font:7px/9px 'Liberation Sans',sans-serif;color:#a0a0a0;white-space:nowrap;">Colour</div><div class="a" style="left:1268px;top:328px;width:0;height:0;border-style:solid;border-width:3px 2px 0 2px;border-color:#ccc transparent transparent transparent"></div><div class="a" style="left:1272px;top:326px;width:5px;height:6px;background:#8a8a8a"></div><div class="a" style="left:1141px;top:335px;width:139px;height:128px;background:#474747"></div><div class="a" style="right:102px;top:341px;font:7px/9px 'Liberation Sans',sans-serif;color:#c8c8c8;white-space:nowrap;text-align:right;letter-spacing:-0.3px">Weight:</div><div class="spin" style="left:1182px;top:341px"></div><div class="a" style="left:1192px;top:342px;width:23px;height:9px;background:#a9a9a9;font:7px/9px 'Liberation Sans',sans-serif;color:#333;padding-left:2px">1 pt</div><div class="a" style="left:1215px;top:342px;width:9px;height:9px;background:#3e3e3e"><div class="a" style="left:2px;top:2px;width:0;height:0;border-style:solid;border-width:4px 2.5px 0 2.5px;border-color:#e0e0e0 transparent transparent transparent"></div></div><div class="a" style="right:41px;top:341px;font:7px/9px 'Liberation Sans',sans-serif;color:#c8c8c8;white-space:nowrap;text-align:right;letter-spacing:-0.3px">Cap:</div><div class="a" style="right:102px;top:356px;font:7px/9px 'Liberation Sans',sans-serif;color:#c8c8c8;white-space:nowrap;text-align:right;letter-spacing:-0.3px">Miter Limit:</div><div class="spin" style="left:1182px;top:357px"></div><div class="a" style="left:1192px;top:357px;width:22px;height:9px;background:#a9a9a9;font:7px/9px 'Liberation Sans',sans-serif;color:#333;padding-left:2px">4</div><div class="a" style="left:1218px;top:356px;font:7px/9px 'Liberation Sans',sans-serif;color:#999;white-space:nowrap;">x</div><div class="a" style="right:41px;top:356px;font:7px/9px 'Liberation Sans',sans-serif;color:#c8c8c8;white-space:nowrap;text-align:right;letter-spacing:-0.3px">Join:</div><div class="a" style="left:1242px;top:341px;width:10px;height:10px;background:#262626"><div class="a" style="left:1px;top:1px;width:8px;height:8px;background:#dcdcdc;border-radius:0"><div class="a" style="left:3px;top:3px;width:3px;height:3px;background:#222"></div></div></div><div class="a" style="left:1255px;top:341px;width:10px;height:10px;background:#474747"><div class="a" style="left:1px;top:1px;width:8px;height:8px;background:#dcdcdc;border-radius:3px 0 0 0"><div class="a" style="left:3px;top:3px;width:3px;height:3px;background:#222"></div></div></div><div class="a" style="left:1267px;top:341px;width:10px;height:10px;background:#474747"><div class="a" style="left:1px;top:1px;width:8px;height:8px;background:#dcdcdc;border-radius:0"><div class="a" style="left:3px;top:3px;width:3px;height:3px;background:#222"></div></div></div><div class="a" style="left:1242px;top:356px;width:10px;height:10px;background:#262626"><div class="a" style="left:1px;top:1px;width:8px;height:8px;background:#dcdcdc;border-radius:3px 0 0 0"><div class="a" style="left:3px;top:3px;width:3px;height:3px;background:#222"></div></div></div><div class="a" style="left:1255px;top:356px;width:10px;height:10px;background:#474747"><div class="a" style="left:1px;top:1px;width:8px;height:8px;background:#dcdcdc;border-radius:3px 0 0 0"><div class="a" style="left:3px;top:3px;width:3px;height:3px;background:#222"></div></div></div><div class="a" style="left:1267px;top:356px;width:10px;height:10px;background:#474747"><div class="a" style="left:1px;top:1px;width:8px;height:8px;background:#dcdcdc;border-radius:3px 0 0 0"><div class="a" style="left:3px;top:3px;width:3px;height:3px;background:#222"></div></div></div><div class="a" style="left:1141px;top:373px;width:130px;height:1px;background:#3e3e3e"></div><div class="a" style="right:99px;top:377px;font:7px/9px 'Liberation Sans',sans-serif;color:#c8c8c8;white-space:nowrap;text-align:right;letter-spacing:-0.3px">Align Stroke:</div><div class="a" style="left:1190px;top:376px;width:11px;height:11px;background:#262626"></div><div class="a" style="left:1192px;top:377px;width:8px;height:8px;border-left:2px solid #ddd;border-bottom:2px solid #ddd"></div><div class="a" style="left:1205px;top:377px;width:8px;height:8px;border-left:2px solid #ddd;border-bottom:2px solid #ddd"></div><div class="a" style="left:1217px;top:377px;width:8px;height:8px;border-left:2px solid #ddd;border-bottom:2px solid #ddd"></div><div class="a" style="left:1141px;top:388px;width:130px;height:1px;background:#3e3e3e"></div><div class="a" style="right:102px;top:397px;font:7px/9px 'Liberation Sans',sans-serif;color:#c8c8c8;white-space:nowrap;text-align:right;letter-spacing:-0.3px">Type:</div><div class="a" style="left:1182px;top:397px;width:84px;height:9px;background:#000;border:1px solid #c8c8c8"></div><div class="a" style="left:1266px;top:397px;width:9px;height:9px;background:#3e3e3e"><div class="a" style="left:2px;top:2px;width:0;height:0;border-style:solid;border-width:4px 2.5px 0 2.5px;border-color:#e0e0e0 transparent transparent transparent"></div></div><div class="a" style="right:102px;top:410px;font:7px/9px 'Liberation Sans',sans-serif;color:#c8c8c8;white-space:nowrap;text-align:right;letter-spacing:-0.3px">Start:</div><div class="a" style="left:1182px;top:410px;width:84px;height:9px;background:#a9a9a9;font:7px/9px 'Liberation Sans',sans-serif;color:#333;padding-left:2px">None</div><div class="a" style="left:1266px;top:410px;width:9px;height:9px;background:#3e3e3e"><div class="a" style="left:2px;top:2px;width:0;height:0;border-style:solid;border-width:4px 2.5px 0 2.5px;border-color:#e0e0e0 transparent transparent transparent"></div></div><div class="a" style="right:102px;top:423px;font:7px/9px 'Liberation Sans',sans-serif;color:#c8c8c8;white-space:nowrap;text-align:right;letter-spacing:-0.3px">End:</div><div class="a" style="left:1182px;top:423px;width:84px;height:9px;background:#a9a9a9;font:7px/9px 'Liberation Sans',sans-serif;color:#333;padding-left:2px">None</div><div class="a" style="left:1266px;top:423px;width:9px;height:9px;background:#3e3e3e"><div class="a" style="left:2px;top:2px;width:0;height:0;border-style:solid;border-width:4px 2.5px 0 2.5px;border-color:#e0e0e0 transparent transparent transparent"></div></div><div class="a" style="right:102px;top:437px;font:7px/9px 'Liberation Sans',sans-serif;color:#a8a8a8;white-space:nowrap;text-align:right;letter-spacing:-0.3px">Gap Colour:</div><div class="a" style="left:1182px;top:437px;width:84px;height:9px;background:#9a9a9a"></div><div class="a" style="left:1183px;top:437px;width:8px;height:9px;background:linear-gradient(135deg,#fff 40%,#d02030 40% 60%,#fff 60%)"></div><div class="a" style="left:1192px;top:437px;width:20px;height:9px;background:#888;font:6px/9px 'Liberation Sans',sans-serif;color:#666;padding-left:1px;border:1px solid #777">[None]</div><div class="a" style="left:1266px;top:437px;width:9px;height:9px;background:#444"></div><div class="a" style="right:102px;top:450px;font:7px/9px 'Liberation Sans',sans-serif;color:#a8a8a8;white-space:nowrap;text-align:right;letter-spacing:-0.3px">Gap Tint:</div><div class="a" style="left:1183px;top:450px;width:20px;height:9px;background:#8e8e8e;font:6px/9px 'Liberation Sans',sans-serif;color:#666;padding-left:1px">100%</div><div class="a" style="left:1207px;top:452px;width:0;height:0;border-style:solid;border-width:2.5px 0 2.5px 3px;border-color:transparent transparent transparent #777"></div><div class="a" style="left:1141px;top:463px;width:139px;height:2px;background:#2c2c2c"></div><div class="a" style="left:1141px;top:465px;width:139px;height:11px;background:#353535"></div><div class="a" style="left:1142px;top:465px;width:43px;height:11px;background:#4a4a4a"></div><div class="a" style="left:1144px;top:465px;font:7px/9px 'Liberation Sans',sans-serif;color:#e0e0e0;white-space:nowrap;letter-spacing:-0.1px">&#x21D5;Swatches</div><div class="a" style="left:1268px;top:469px;width:0;height:0;border-style:solid;border-width:3px 2px 0 2px;border-color:#ccc transparent transparent transparent"></div><div class="a" style="left:1272px;top:467px;width:5px;height:6px;background:#8a8a8a"></div><div class="a" style="left:1141px;top:476px;width:139px;height:230px;background:#474747"></div><div class="a" style="left:1148px;top:481px;width:8px;height:8px;border:1px solid #aaa"></div><div class="a" style="left:1144px;top:477px;width:9px;height:9px;background:#1d9be2"></div><div class="a" style="left:1166px;top:480px;width:8px;height:8px;border:1px solid #ddd;background:#333"></div><div class="a" style="left:1177px;top:478px;font:9px/11px 'Liberation Sans',sans-serif;color:#ddd;white-space:nowrap;font-family:'Liberation Serif',serif;font-weight:bold">T</div><div class="a" style="left:1214px;top:479px;font:7px/9px 'Liberation Sans',sans-serif;color:#a8a8a8;white-space:nowrap;">Tint:</div><div class="a" style="left:1230px;top:480px;width:20px;height:8px;background:#a9a9a9;font:7px/8px 'Liberation Sans',sans-serif;color:#333;padding-left:1px">100</div><div class="a" style="left:1250px;top:480px;width:7px;height:8px;background:#3e3e3e"><div class="a" style="left:2px;top:1.5px;width:0;height:0;border-style:solid;border-width:2.5px 0 2.5px 3px;border-color:transparent transparent transparent #ddd"></div></div><div class="a" style="left:1259px;top:479px;font:7px/9px 'Liberation Sans',sans-serif;color:#a8a8a8;white-space:nowrap;">%</div><div class="a" style="left:1141px;top:492px;width:130px;height:1px;background:#3a3a3a"></div><div class="a" style="left:1141px;top:493.0px;width:130px;height:13px;background:#474747;border-bottom:1px solid #3d3d3d"></div><div class="a" style="left:1143px;top:496.0px;width:8px;height:8px;background:linear-gradient(135deg,#fff 38%,#d02030 38% 62%,#fff 62%)"></div><div class="a" style="left:1156px;top:495.0px;font:7px/9px 'Liberation Sans',sans-serif;color:#c8c8c8;white-space:nowrap;letter-spacing:-0.2px">[None]</div><div class="a" style="left:1239px;top:496.0px;width:8px;height:8px;background:linear-gradient(45deg,transparent 42%,#ccc 42% 58%,transparent 58%),linear-gradient(-45deg,transparent 42%,#ccc 42% 58%,transparent 58%)"></div><div class="a" style="left:1260px;top:496.0px;width:8px;height:8px;background:linear-gradient(135deg,#eee 38%,#d06070 38% 62%,#eee 62%)"></div><div class="a" style="left:1141px;top:506.4px;width:130px;height:13px;background:#474747;border-bottom:1px solid #3d3d3d"></div><div class="a" style="left:1143px;top:509.4px;width:8px;height:8px;background:#000;border:1px solid #222"></div><div class="a" style="left:1156px;top:508.35px;font:7px/9px 'Liberation Sans',sans-serif;color:#c8c8c8;white-space:nowrap;letter-spacing:-0.2px">[Registration]</div><div class="a" style="left:1239px;top:509.4px;width:8px;height:8px;background:linear-gradient(45deg,transparent 42%,#ccc 42% 58%,transparent 58%),linear-gradient(-45deg,transparent 42%,#ccc 42% 58%,transparent 58%)"></div><div class="a" style="left:1260px;top:509.4px;width:8px;height:8px;background:#ddd"><div class="a" style="left:1.5px;top:1.5px;width:5px;height:5px;border:1px solid #333;border-radius:50%"></div></div><div class="a" style="left:1141px;top:519.7px;width:130px;height:13px;background:#474747;border-bottom:1px solid #3d3d3d"></div><div class="a" style="left:1143px;top:522.7px;width:8px;height:8px;background:#fff;border:1px solid #222"></div><div class="a" style="left:1156px;top:521.7px;font:7px/9px 'Liberation Sans',sans-serif;color:#c8c8c8;white-space:nowrap;letter-spacing:-0.2px">[Paper]</div><div class="a" style="left:1141px;top:533.0px;width:130px;height:13px;background:#474747;border-bottom:1px solid #3d3d3d"></div><div class="a" style="left:1143px;top:536.0px;width:8px;height:8px;background:#000;border:1px solid #222"></div><div class="a" style="left:1156px;top:535.05px;font:7px/9px 'Liberation Sans',sans-serif;color:#c8c8c8;white-space:nowrap;letter-spacing:-0.2px">[Black]</div><div class="a" style="left:1239px;top:536.0px;width:8px;height:8px;background:linear-gradient(45deg,transparent 42%,#ccc 42% 58%,transparent 58%),linear-gradient(-45deg,transparent 42%,#ccc 42% 58%,transparent 58%)"></div><div class="a" style="left:1249px;top:536.0px;width:8px;height:8px;background:#999;border:1px solid #bbb"></div><div class="a" style="left:1260px;top:536.0px;width:8px;height:8px;background:conic-gradient(#f0f 0 25%,#ff0 25% 50%,#0cf 50% 75%,#000 75%);border:1px solid #ddd"></div><div class="a" style="left:1141px;top:546.4px;width:130px;height:13px;background:#4b5567;border-bottom:1px solid #3d3d3d"></div><div class="a" style="left:1143px;top:549.4px;width:8px;height:8px;background:#1d9be2;border:1px solid #222"></div><div class="a" style="left:1156px;top:548.4px;font:7px/9px 'Liberation Sans',sans-serif;color:#f4f4f4;white-space:nowrap;font-weight:bold;letter-spacing:-0.2px">C=100 M=0 Y=0 K=0</div><div class="a" style="left:1249px;top:549.4px;width:8px;height:8px;background:#999;border:1px solid #bbb"></div><div class="a" style="left:1260px;top:549.4px;width:8px;height:8px;background:conic-gradient(#f0f 0 25%,#ff0 25% 50%,#0cf 50% 75%,#000 75%);border:1px solid #ddd"></div><div class="a" style="left:1141px;top:559.8px;width:130px;height:13px;background:#474747;border-bottom:1px solid #3d3d3d"></div><div class="a" style="left:1143px;top:562.8px;width:8px;height:8px;background:#e0147f;border:1px solid #222"></div><div class="a" style="left:1156px;top:561.75px;font:7px/9px 'Liberation Sans',sans-serif;color:#c8c8c8;white-space:nowrap;letter-spacing:-0.2px">C=0 M=100 Y=0 K=0</div><div class="a" style="left:1249px;top:562.8px;width:8px;height:8px;background:#999;border:1px solid #bbb"></div><div class="a" style="left:1260px;top:562.8px;width:8px;height:8px;background:conic-gradient(#f0f 0 25%,#ff0 25% 50%,#0cf 50% 75%,#000 75%);border:1px solid #ddd"></div><div class="a" style="left:1141px;top:573.1px;width:130px;height:13px;background:#474747;border-bottom:1px solid #3d3d3d"></div><div class="a" style="left:1143px;top:576.1px;width:8px;height:8px;background:#f6e700;border:1px solid #222"></div><div class="a" style="left:1156px;top:575.1px;font:7px/9px 'Liberation Sans',sans-serif;color:#c8c8c8;white-space:nowrap;letter-spacing:-0.2px">C=0 M=0 Y=100 K=0</div><div class="a" style="left:1249px;top:576.1px;width:8px;height:8px;background:#999;border:1px solid #bbb"></div><div class="a" style="left:1260px;top:576.1px;width:8px;height:8px;background:conic-gradient(#f0f 0 25%,#ff0 25% 50%,#0cf 50% 75%,#000 75%);border:1px solid #ddd"></div><div class="a" style="left:1141px;top:586.5px;width:130px;height:13px;background:#474747;border-bottom:1px solid #3d3d3d"></div><div class="a" style="left:1143px;top:589.5px;width:8px;height:8px;background:#d31a22;border:1px solid #222"></div><div class="a" style="left:1156px;top:588.45px;font:7px/9px 'Liberation Sans',sans-serif;color:#c8c8c8;white-space:nowrap;letter-spacing:-0.2px">C=15 M=100 Y=100 K=0</div><div class="a" style="left:1249px;top:589.5px;width:8px;height:8px;background:#999;border:1px solid #bbb"></div><div class="a" style="left:1260px;top:589.5px;width:8px;height:8px;background:conic-gradient(#f0f 0 25%,#ff0 25% 50%,#0cf 50% 75%,#000 75%);border:1px solid #ddd"></div><div class="a" style="left:1141px;top:599.8px;width:130px;height:13px;background:#474747;border-bottom:1px solid #3d3d3d"></div><div class="a" style="left:1143px;top:602.8px;width:8px;height:8px;background:#3aaa35;border:1px solid #222"></div><div class="a" style="left:1156px;top:601.8px;font:7px/9px 'Liberation Sans',sans-serif;color:#c8c8c8;white-space:nowrap;letter-spacing:-0.2px">C=75 M=5 Y=100 K=0</div><div class="a" style="left:1249px;top:602.8px;width:8px;height:8px;background:#999;border:1px solid #bbb"></div><div class="a" style="left:1260px;top:602.8px;width:8px;height:8px;background:conic-gradient(#f0f 0 25%,#ff0 25% 50%,#0cf 50% 75%,#000 75%);border:1px solid #ddd"></div><div class="a" style="left:1141px;top:613.1px;width:130px;height:13px;background:#474747;border-bottom:1px solid #3d3d3d"></div><div class="a" style="left:1143px;top:616.1px;width:8px;height:8px;background:#23399a;border:1px solid #222"></div><div class="a" style="left:1156px;top:615.15px;font:7px/9px 'Liberation Sans',sans-serif;color:#c8c8c8;white-space:nowrap;letter-spacing:-0.2px">C=100 M=90 Y=10 K=0</div><div class="a" style="left:1249px;top:616.1px;width:8px;height:8px;background:#999;border:1px solid #bbb"></div><div class="a" style="left:1260px;top:616.1px;width:8px;height:8px;background:conic-gradient(#f0f 0 25%,#ff0 25% 50%,#0cf 50% 75%,#000 75%);border:1px solid #ddd"></div><div class="a" style="left:1271px;top:493px;width:9px;height:213px;background:#3f3f3f"></div><div class="a" style="left:1273px;top:497px;width:0;height:0;border-style:solid;border-width:0 3px 3px 3px;border-color:transparent transparent #888 transparent"></div><div class="a" style="left:1273px;top:686px;width:0;height:0;border-style:solid;border-width:3px 3px 0 3px;border-color:#888 transparent transparent transparent"></div><div class="a" style="left:1141px;top:692px;width:139px;height:14px;background:#484848;border-top:1px solid #3c3c3c"></div><div class="a" style="left:1174px;top:695px;width:8px;height:8px;border:1px solid #bbb;background:#6a6a6a"></div><div class="a" style="left:1195px;top:695px;width:8px;height:8px;border:1px solid #bbb;background:#6a6a6a"></div><div class="a" style="left:1215px;top:695px;width:8px;height:8px;border:1px solid #bbb;background:#6a6a6a"></div><div class="a" style="left:1236px;top:695px;width:8px;height:8px;border:1px solid #bbb;background:#6a6a6a"></div><div class="a" style="left:1256px;top:695px;width:8px;height:8px;border:1px solid #bbb;background:#6a6a6a"></div>
<div id="menu" class="a"><div class="a" style="left:18px;top:0;width:2px;height:378px;background:#e2e2e2;border-right:1px solid #fff"></div><div class="mi" style="top:1.50px">Arrange</div><div class="marr" style="top:5.00px"></div><div class="mi" style="top:16.00px">Workspace</div><div class="marr" style="top:19.50px"></div><div class="mi" style="top:35.70px">Articles</div><div class="mi" style="top:50.41px">Colour</div><div class="marr" style="top:53.91px"></div><div class="mi" style="top:65.11px">Control</div><div class="ms" style="top:65.11px">Ctrl+Alt+6</div><div class="chk" style="top:64.11px"><span>&#x2714;</span></div><div class="mi" style="top:79.81px">Editorial</div><div class="marr" style="top:83.31px"></div><div class="mi" style="top:94.52px">Effects</div><div class="ms" style="top:94.52px">Ctrl+Shift+F10</div><div class="mi" style="top:109.23px">Extensions</div><div class="marr" style="top:112.73px"></div><div class="mi" style="top:123.93px">Folio Builder</div><div class="mi" style="top:138.63px">Folio Overlays</div><div class="mi" style="top:153.34px">Info</div><div class="ms" style="top:153.34px">F8</div><div class="mi" style="top:168.05px">Interactive</div><div class="marr" style="top:171.55px"></div><div class="mi" style="top:182.75px">Layers</div><div class="ms" style="top:182.75px">F7</div><div class="mi" style="top:197.45px">Links</div><div class="ms" style="top:197.45px">Ctrl+Shift+D</div><div class="mi" style="top:212.16px">Mini Bridge</div><div class="mi" style="top:226.87px">Object &amp; Layout</div><div class="marr" style="top:230.37px"></div><div class="mi" style="top:241.57px">Output</div><div class="marr" style="top:245.07px"></div><div class="mi" style="top:256.27px">Pages</div><div class="ms" style="top:256.27px">F12</div><div class="chk" style="top:255.27px"><span>&#x2714;</span></div><div class="mi" style="top:270.98px">Stroke</div><div class="ms" style="top:270.98px">F10</div><div class="chk" style="top:269.98px"><span>&#x2714;</span></div><div class="mi" style="top:285.69px">Styles</div><div class="marr" style="top:289.19px"></div><div class="mi" style="top:300.39px">Text Wrap</div><div class="ms" style="top:300.39px">Ctrl+Alt+W</div><div class="mi" style="top:315.09px">Tools</div><div class="chk" style="top:314.09px"><span>&#x2714;</span></div><div class="mi" style="top:329.80px">Type &amp; Tables</div><div class="marr" style="top:333.30px"></div><div class="mi" style="top:344.50px">Utilities</div><div class="marr" style="top:348.00px"></div><div class="mi" style="top:363.50px">1 *Untitled-1 @ 79% [Overprint Preview]</div><div class="chk" style="top:362.50px"><span>&#x2714;</span></div><div class="a" style="left:21px;top:32px;width:230px;height:2px;background:#d5d5d5;border-bottom:1px solid #fafafa"></div><div class="a" style="left:21px;top:359px;width:230px;height:2px;background:#d5d5d5;border-bottom:1px solid #fafafa"></div></div>
<svg class="a" style="left:1040px;top:640px" width="240" height="80" viewBox="1040 640 240 80"><g fill="#6aa896" fill-opacity="0.85"><path d="M1077 650 L1135 650 L1130 667 L1072 667 Z"/><path d="M1142 660 L1168 660 L1164 672 L1138 672 Z"/><path d="M1068 675 L1112 675 L1106 694 L1062 694 Z"/><path d="M1062 702 L1085 702 L1080 720 L1057 720 Z"/><path d="M1134 676 L1150 676 L1144 696 L1128 696 Z"/></g><defs><filter id="glow" x="-20%" y="-20%" width="140%" height="140%"><feMorphology in="SourceAlpha" operator="dilate" radius="2.5" result="d"/><feGaussianBlur in="d" stdDeviation="1.5" result="b"/><feFlood flood-color="#d8d8d8" flood-opacity="0.9"/><feComposite in2="b" operator="in" result="g"/><feMerge><feMergeNode in="g"/><feMergeNode in="SourceGraphic"/></feMerge></filter></defs><g filter="url(#glow)"><text x="1131" y="695" font-family="Liberation Sans" font-weight="bold" font-size="33" fill="#1e1e1e" textLength="114" lengthAdjust="spacingAndGlyphs" transform="translate(0,-66.5) scale(1,1.1)">FILECR</text><text x="1232" y="712.5" font-family="Liberation Sans" font-size="19" fill="#1e1e1e" textLength="41" lengthAdjust="spacingAndGlyphs">.com</text></g><text x="1167" y="682.5" font-family="Liberation Sans" font-weight="bold" font-size="13" fill="#2a2a2a" fill-opacity="0.7" textLength="53" lengthAdjust="spacingAndGlyphs">FILECR</text><text x="1214" y="692" font-family="Liberation Sans" font-size="8" fill="#333" fill-opacity="0.7" textLength="19" lengthAdjust="spacingAndGlyphs">.com</text></svg>

</body></html>
